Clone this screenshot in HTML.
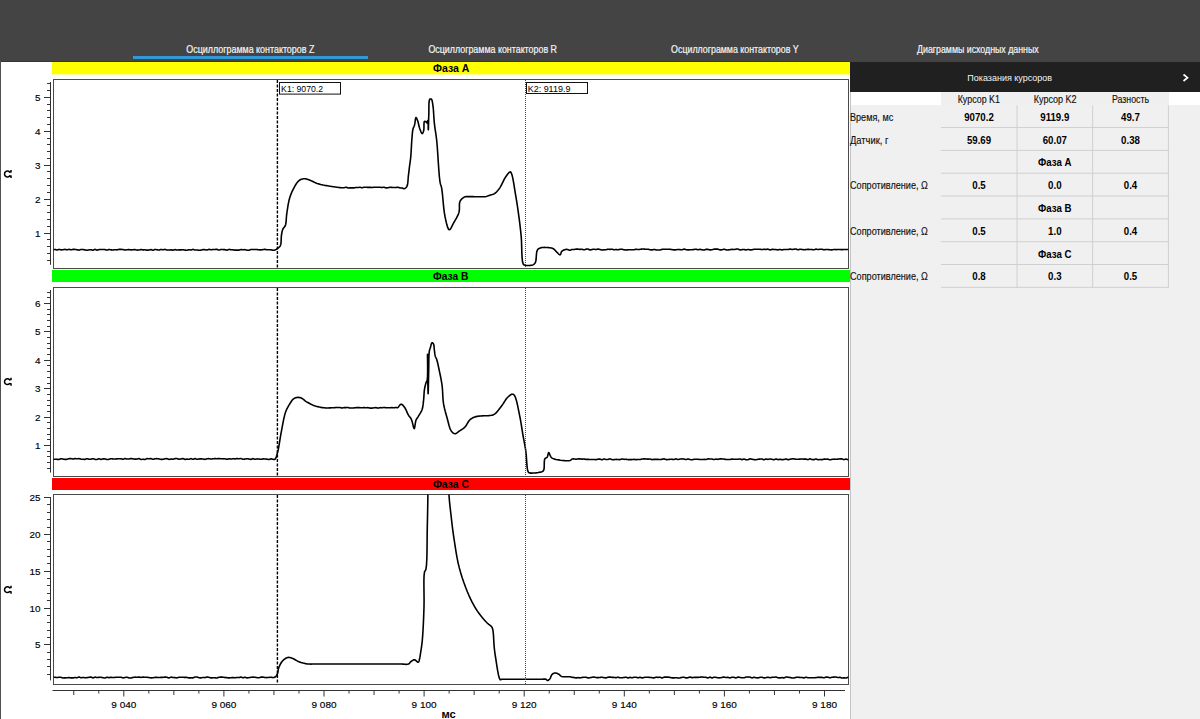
<!DOCTYPE html>
<html><head><meta charset="utf-8">
<style>
html,body{margin:0;padding:0;}
body{width:1200px;height:719px;overflow:hidden;position:relative;background:#fff;}
svg{position:absolute;left:0;top:0;display:block;}
</style></head><body>
<svg width="1200" height="719" viewBox="0 0 1200 719">
<rect x="0" y="0" width="1200" height="61" fill="#444444"/>
<rect x="0" y="61" width="850" height="1" fill="#34343c"/><rect x="850" y="61" width="350" height="1" fill="#444444"/>
<text x="186.30" y="52.80" text-anchor="start" font-family='"Liberation Sans", sans-serif' font-weight="normal" font-size="10.2" fill="#f4f4f4" textLength="128.10" lengthAdjust="spacingAndGlyphs" stroke="#f4f4f4" stroke-width="0.2">Осциллограмма контакторов Z</text>
<text x="428.40" y="52.80" text-anchor="start" font-family='"Liberation Sans", sans-serif' font-weight="normal" font-size="10.2" fill="#f4f4f4" textLength="128.60" lengthAdjust="spacingAndGlyphs" stroke="#f4f4f4" stroke-width="0.2">Осциллограмма контакторов R</text>
<text x="671.10" y="52.80" text-anchor="start" font-family='"Liberation Sans", sans-serif' font-weight="normal" font-size="10.2" fill="#f4f4f4" textLength="127.60" lengthAdjust="spacingAndGlyphs" stroke="#f4f4f4" stroke-width="0.2">Осциллограмма контакторов Y</text>
<text x="917.10" y="52.80" text-anchor="start" font-family='"Liberation Sans", sans-serif' font-weight="normal" font-size="10.2" fill="#f4f4f4" textLength="121.60" lengthAdjust="spacingAndGlyphs" stroke="#f4f4f4" stroke-width="0.2">Диаграммы исходных данных</text>
<rect x="133" y="56" width="235" height="3" fill="#3399d6"/>
<rect x="0" y="62" width="850" height="657" fill="#ffffff"/>
<rect x="0" y="61" width="1" height="658" fill="#505050"/>
<defs>
<clipPath id="c0"><rect x="53.5" y="79.5" width="795" height="188"/></clipPath>
<clipPath id="c1"><rect x="53.5" y="287.5" width="795" height="188"/></clipPath>
<clipPath id="c2"><rect x="53.5" y="494.5" width="795" height="189"/></clipPath>
</defs>
<rect x="52" y="62" width="798" height="12.4" fill="#ffff00"/>
<text x="432.90" y="72.00" text-anchor="start" font-family='"Liberation Sans", sans-serif' font-weight="bold" font-size="10.1" fill="#000" textLength="36.50" lengthAdjust="spacingAndGlyphs">Фаза A</text>
<rect x="52" y="270" width="798" height="12" fill="#00ff00"/>
<text x="432.90" y="280.00" text-anchor="start" font-family='"Liberation Sans", sans-serif' font-weight="bold" font-size="10.1" fill="#000" textLength="35.50" lengthAdjust="spacingAndGlyphs">Фаза B</text>
<rect x="52" y="478" width="798" height="12" fill="#ff0000"/>
<text x="432.90" y="488.00" text-anchor="start" font-family='"Liberation Sans", sans-serif' font-weight="bold" font-size="10.1" fill="#000" textLength="36.20" lengthAdjust="spacingAndGlyphs">Фаза C</text>
<rect x="53.5" y="79.5" width="795" height="189" fill="#fff" stroke="#4a4a4a" stroke-width="1"/>
<rect x="53.5" y="287.5" width="795" height="189" fill="#fff" stroke="#4a4a4a" stroke-width="1"/>
<rect x="53.5" y="494.5" width="795" height="190" fill="#fff" stroke="#4a4a4a" stroke-width="1"/>
<polyline clip-path="url(#c0)" points="53.00,249.64 53.10,249.63 53.37,249.59 53.75,249.55 54.19,249.50 54.62,249.48 55.00,249.49 55.33,249.54 55.67,249.63 56.00,249.73 56.33,249.83 56.67,249.91 57.00,249.94 57.33,249.89 57.67,249.80 58.00,249.68 58.33,249.55 58.67,249.46 59.00,249.42 59.33,249.44 59.67,249.51 60.00,249.60 60.33,249.70 60.67,249.79 61.00,249.83 61.33,249.84 61.67,249.83 62.00,249.80 62.33,249.76 62.67,249.72 63.00,249.68 63.33,249.63 63.67,249.57 64.00,249.51 64.33,249.45 64.67,249.41 65.00,249.40 65.33,249.44 65.67,249.52 66.00,249.61 66.33,249.71 66.67,249.78 67.00,249.81 67.33,249.78 67.67,249.70 68.00,249.60 68.33,249.50 68.67,249.42 69.00,249.38 69.33,249.41 69.67,249.47 70.00,249.56 70.33,249.64 70.67,249.71 71.00,249.74 71.33,249.72 71.67,249.67 72.00,249.60 72.33,249.52 72.67,249.46 73.00,249.41 73.33,249.39 73.67,249.38 74.00,249.38 74.33,249.39 74.67,249.41 75.00,249.43 75.33,249.46 75.67,249.51 76.00,249.56 76.33,249.62 76.67,249.68 77.00,249.73 77.33,249.80 77.67,249.88 78.00,249.97 78.34,250.04 78.67,250.09 79.00,250.09 79.33,250.04 79.67,249.93 80.00,249.80 80.33,249.66 80.66,249.54 81.00,249.46 81.33,249.43 81.66,249.43 82.00,249.45 82.33,249.48 82.67,249.51 83.00,249.55 83.33,249.60 83.67,249.65 84.00,249.72 84.33,249.79 84.67,249.86 85.00,249.91 85.33,249.97 85.67,250.04 86.00,250.10 86.33,250.16 86.67,250.19 87.00,250.20 87.33,250.18 87.67,250.13 88.00,250.06 88.33,249.99 88.67,249.92 89.00,249.87 89.33,249.82 89.67,249.78 90.00,249.74 90.34,249.71 90.67,249.69 91.00,249.71 91.34,249.77 91.67,249.88 92.00,250.01 92.34,250.13 92.67,250.21 93.00,250.23 93.34,250.15 93.67,249.99 94.00,249.80 94.33,249.61 94.67,249.46 95.00,249.39 95.33,249.44 95.66,249.57 96.00,249.74 96.33,249.91 96.66,250.06 97.00,250.12 97.33,250.10 97.66,250.03 98.00,249.92 98.33,249.80 98.66,249.69 99.00,249.61 99.33,249.57 99.66,249.54 100.00,249.52 100.33,249.50 100.67,249.49 101.00,249.48 101.33,249.47 101.67,249.46 102.00,249.45 102.33,249.45 102.67,249.45 103.00,249.46 103.33,249.47 103.67,249.49 104.00,249.51 104.34,249.54 104.67,249.58 105.00,249.63 105.33,249.70 105.67,249.80 106.00,249.90 106.34,250.00 106.67,250.06 107.00,250.08 107.33,250.04 107.67,249.94 108.00,249.80 108.33,249.67 108.67,249.57 109.00,249.51 109.33,249.52 109.66,249.58 110.00,249.65 110.33,249.74 110.67,249.82 111.00,249.87 111.33,249.90 111.67,249.92 112.00,249.94 112.33,249.94 112.67,249.94 113.00,249.93 113.33,249.90 113.67,249.85 114.00,249.80 114.33,249.75 114.67,249.71 115.00,249.69 115.33,249.70 115.67,249.73 116.00,249.78 116.33,249.82 116.67,249.85 117.00,249.84 117.33,249.80 117.67,249.73 118.00,249.63 118.33,249.54 118.67,249.46 119.00,249.41 119.33,249.38 119.67,249.37 120.00,249.37 120.33,249.38 120.67,249.39 121.00,249.40 121.33,249.41 121.67,249.43 122.00,249.44 122.33,249.47 122.67,249.50 123.00,249.54 123.33,249.60 123.67,249.68 124.00,249.77 124.33,249.86 124.67,249.93 125.00,249.96 125.33,249.96 125.67,249.93 126.00,249.88 126.33,249.83 126.67,249.77 127.00,249.73 127.33,249.71 127.67,249.68 128.00,249.65 128.33,249.64 128.67,249.63 129.00,249.63 129.33,249.66 129.67,249.70 130.00,249.76 130.33,249.81 130.67,249.85 131.00,249.88 131.33,249.88 131.67,249.86 132.00,249.84 132.33,249.81 132.67,249.78 133.00,249.76 133.33,249.73 133.67,249.69 134.00,249.65 134.33,249.62 134.67,249.61 135.00,249.62 135.33,249.67 135.67,249.74 136.00,249.84 136.33,249.93 136.67,250.01 137.00,250.06 137.33,250.08 137.67,250.09 138.00,250.07 138.33,250.05 138.67,250.02 139.00,249.98 139.33,249.92 139.67,249.84 140.00,249.75 140.33,249.67 140.67,249.60 141.00,249.57 141.33,249.58 141.67,249.63 142.00,249.70 142.33,249.77 142.67,249.83 143.00,249.87 143.33,249.88 143.67,249.86 144.00,249.84 144.33,249.82 144.67,249.81 145.00,249.82 145.33,249.86 145.67,249.92 146.00,249.99 146.33,250.05 146.67,250.11 147.00,250.14 147.33,250.14 147.67,250.14 148.00,250.12 148.33,250.09 148.67,250.05 149.00,250.01 149.33,249.94 149.67,249.86 150.00,249.76 150.34,249.68 150.67,249.62 151.00,249.61 151.34,249.67 151.67,249.79 152.00,249.94 152.34,250.09 152.67,250.20 153.00,250.23 153.33,250.17 153.67,250.04 154.00,249.87 154.33,249.69 154.66,249.54 155.00,249.46 155.33,249.44 155.66,249.47 156.00,249.53 156.33,249.60 156.67,249.67 157.00,249.73 157.33,249.78 157.67,249.86 158.00,249.93 158.34,249.99 158.67,250.03 159.00,250.03 159.33,249.98 159.67,249.88 160.00,249.76 160.33,249.64 160.67,249.54 161.00,249.49 161.33,249.50 161.67,249.55 162.00,249.63 162.33,249.71 162.67,249.77 163.00,249.79 163.33,249.75 163.67,249.67 164.00,249.57 164.34,249.48 164.67,249.41 165.00,249.39 165.33,249.43 165.67,249.52 166.00,249.64 166.33,249.76 166.66,249.87 167.00,249.95 167.33,250.00 167.66,250.02 168.00,250.04 168.33,250.05 168.67,250.04 169.00,250.04 169.33,250.02 169.67,249.98 170.00,249.94 170.33,249.90 170.67,249.87 171.00,249.87 171.33,249.89 171.67,249.95 172.00,250.02 172.34,250.09 172.67,250.13 173.00,250.14 173.33,250.09 173.67,250.00 174.00,249.88 174.33,249.77 174.67,249.68 175.00,249.63 175.33,249.65 175.66,249.70 176.00,249.78 176.33,249.86 176.67,249.93 177.00,249.98 177.33,249.98 177.67,249.97 178.00,249.95 178.33,249.93 178.67,249.90 179.00,249.88 179.33,249.88 179.67,249.88 180.00,249.88 180.33,249.88 180.67,249.88 181.00,249.87 181.33,249.85 181.67,249.83 182.00,249.79 182.33,249.77 182.67,249.75 183.00,249.76 183.33,249.79 183.67,249.85 184.00,249.92 184.33,249.99 184.67,250.06 185.00,250.11 185.33,250.14 185.67,250.17 186.00,250.20 186.33,250.22 186.67,250.22 187.00,250.20 187.33,250.15 187.67,250.08 188.00,249.98 188.33,249.89 188.67,249.82 189.00,249.78 189.33,249.78 189.67,249.82 190.00,249.87 190.33,249.92 190.67,249.95 191.00,249.95 191.34,249.89 191.67,249.78 192.00,249.65 192.33,249.53 192.67,249.44 193.00,249.40 193.33,249.44 193.67,249.54 194.00,249.66 194.33,249.79 194.66,249.91 195.00,249.98 195.33,250.00 195.66,250.00 196.00,249.97 196.33,249.94 196.67,249.93 197.00,249.93 197.33,249.97 197.67,250.03 198.00,250.09 198.33,250.16 198.67,250.21 199.00,250.24 199.33,250.25 199.67,250.24 200.00,250.22 200.33,250.18 200.67,250.14 201.00,250.09 201.33,250.02 201.67,249.93 202.00,249.83 202.33,249.74 202.67,249.66 203.00,249.61 203.33,249.59 203.66,249.59 204.00,249.61 204.33,249.63 204.67,249.67 205.00,249.70 205.33,249.74 205.67,249.80 206.00,249.87 206.34,249.92 206.67,249.95 207.00,249.95 207.33,249.89 207.67,249.78 208.00,249.65 208.33,249.52 208.67,249.42 209.00,249.37 209.33,249.39 209.66,249.46 210.00,249.55 210.33,249.65 210.67,249.73 211.00,249.77 211.33,249.76 211.67,249.72 212.00,249.66 212.33,249.60 212.67,249.54 213.00,249.50 213.33,249.48 213.67,249.47 214.00,249.47 214.33,249.46 214.67,249.46 215.00,249.46 215.33,249.44 215.67,249.41 216.00,249.39 216.34,249.37 216.67,249.37 217.00,249.40 217.34,249.48 217.67,249.61 218.00,249.75 218.33,249.89 218.67,250.00 219.00,250.04 219.33,250.01 219.66,249.91 220.00,249.79 220.33,249.65 220.66,249.54 221.00,249.47 221.33,249.45 221.66,249.45 222.00,249.48 222.33,249.51 222.67,249.55 223.00,249.57 223.33,249.59 223.67,249.60 224.00,249.62 224.33,249.64 224.67,249.66 225.00,249.70 225.33,249.77 225.67,249.87 226.00,249.97 226.34,250.06 226.67,250.12 227.00,250.13 227.33,250.07 227.67,249.94 228.00,249.78 228.33,249.62 228.66,249.49 229.00,249.42 229.33,249.42 229.66,249.47 230.00,249.54 230.33,249.62 230.67,249.70 231.00,249.75 231.33,249.78 231.67,249.79 232.00,249.80 232.33,249.81 232.67,249.82 233.00,249.84 233.33,249.89 233.67,249.94 234.00,250.00 234.33,250.06 234.67,250.11 235.00,250.15 235.33,250.15 235.67,250.15 236.00,250.13 236.33,250.11 236.67,250.10 237.00,250.09 237.33,250.09 237.67,250.11 238.00,250.14 238.34,250.15 238.67,250.15 239.00,250.13 239.33,250.07 239.67,249.97 240.00,249.86 240.33,249.75 240.67,249.66 241.00,249.60 241.33,249.59 241.66,249.60 242.00,249.63 242.33,249.67 242.67,249.71 243.00,249.72 243.33,249.72 243.67,249.70 244.00,249.68 244.34,249.66 244.67,249.65 245.00,249.67 245.33,249.73 245.67,249.81 246.00,249.90 246.33,250.00 246.67,250.08 247.00,250.15 247.33,250.19 247.67,250.23 248.00,250.25 248.34,250.26 248.67,250.25 249.00,250.21 249.34,250.13 249.67,250.00 250.00,249.85 250.33,249.70 250.66,249.57 251.00,249.49 251.33,249.45 251.66,249.44 252.00,249.45 252.33,249.47 252.67,249.49 253.00,249.51 253.33,249.52 253.67,249.53 254.00,249.54 254.33,249.54 254.67,249.55 255.00,249.56 255.33,249.56 255.67,249.55 256.00,249.55 256.33,249.54 256.67,249.55 257.00,249.56 257.33,249.59 257.67,249.62 258.00,249.67 258.33,249.71 258.67,249.75 259.00,249.79 259.33,249.81 259.67,249.84 260.00,249.87 260.33,249.88 260.67,249.89 261.00,249.88 261.33,249.85 261.67,249.81 262.00,249.75 262.33,249.69 262.67,249.64 263.00,249.59 263.33,249.54 263.67,249.48 264.00,249.43 264.33,249.38 264.67,249.36 265.00,249.35 265.33,249.39 265.67,249.45 266.00,249.53 266.33,249.61 266.67,249.68 267.00,249.73 267.33,249.74 267.67,249.73 268.00,249.72 268.33,249.70 268.67,249.68 269.00,249.68 269.33,249.70 269.67,249.72 270.00,249.75 270.33,249.78 270.67,249.82 271.00,249.86 271.33,249.91 271.67,249.98 272.00,250.06 272.33,250.13 272.67,250.18 273.00,250.21 273.33,250.21 273.66,250.21 273.99,250.18 274.33,250.14 274.66,250.07 275.00,249.97 275.43,249.80 275.86,249.58 276.30,249.33 276.74,249.04 277.17,248.73 277.60,248.40 278.10,248.03 278.61,247.65 279.11,247.24 279.59,246.78 280.03,246.24 280.40,245.60 280.83,244.22 281.05,242.48 281.16,240.53 281.22,238.52 281.31,236.59 281.50,234.90 281.70,233.75 281.90,232.64 282.11,231.59 282.36,230.59 282.65,229.66 283.00,228.80 283.34,228.23 283.73,227.76 284.15,227.33 284.57,226.88 284.97,226.35 285.30,225.70 285.73,224.18 286.01,222.32 286.20,220.22 286.35,217.98 286.53,215.71 286.80,213.50 287.17,211.00 287.56,208.39 287.98,205.72 288.45,203.09 288.98,200.56 289.60,198.20 290.17,196.38 290.79,194.65 291.45,192.98 292.15,191.38 292.90,189.82 293.70,188.30 294.48,186.86 295.29,185.40 296.15,183.99 297.05,182.67 298.00,181.52 299.00,180.60 299.84,180.03 300.72,179.57 301.63,179.21 302.55,178.94 303.48,178.78 304.40,178.70 305.29,178.74 306.19,178.91 307.08,179.18 307.98,179.50 308.89,179.85 309.80,180.20 310.81,180.61 311.83,181.08 312.85,181.58 313.88,182.09 314.93,182.57 316.00,183.00 317.13,183.40 318.29,183.76 319.46,184.11 320.64,184.43 321.82,184.72 323.00,185.00 324.15,185.24 325.28,185.46 326.42,185.65 327.57,185.83 328.76,186.01 330.00,186.20 331.65,186.46 333.48,186.74 335.36,187.01 337.16,187.27 338.75,187.48 340.00,187.61 340.42,187.65 340.78,187.67 341.09,187.68 341.39,187.68 341.68,187.69 342.00,187.69 342.33,187.71 342.67,187.73 343.00,187.75 343.34,187.77 343.67,187.76 344.00,187.74 344.34,187.68 344.67,187.57 345.00,187.45 345.34,187.34 345.67,187.27 346.00,187.24 346.33,187.30 346.67,187.41 347.00,187.56 347.33,187.71 347.66,187.84 348.00,187.92 348.33,187.94 348.66,187.94 349.00,187.91 349.33,187.87 349.67,187.84 350.00,187.82 350.33,187.83 350.67,187.84 351.00,187.86 351.33,187.88 351.67,187.89 352.00,187.90 352.33,187.90 352.67,187.90 353.00,187.89 353.33,187.88 353.67,187.87 354.00,187.84 354.33,187.80 354.67,187.74 355.00,187.67 355.33,187.61 355.67,187.55 356.00,187.51 356.33,187.50 356.67,187.50 357.00,187.51 357.33,187.52 357.67,187.53 358.00,187.52 358.33,187.49 358.67,187.43 359.00,187.38 359.33,187.32 359.67,187.29 360.00,187.28 360.33,187.33 360.67,187.41 361.00,187.51 361.33,187.61 361.67,187.68 362.00,187.71 362.33,187.68 362.67,187.60 363.00,187.50 363.33,187.40 363.67,187.31 364.00,187.25 364.33,187.22 364.66,187.21 365.00,187.22 365.33,187.23 365.67,187.24 366.00,187.25 366.33,187.27 366.67,187.29 367.00,187.31 367.33,187.34 367.67,187.36 368.00,187.37 368.33,187.37 368.67,187.36 369.00,187.35 369.33,187.33 369.67,187.33 370.00,187.33 370.33,187.35 370.67,187.38 371.00,187.41 371.33,187.45 371.67,187.47 372.00,187.47 372.33,187.45 372.67,187.42 373.00,187.37 373.33,187.32 373.67,187.27 374.00,187.24 374.33,187.22 374.67,187.21 375.00,187.20 375.33,187.20 375.67,187.20 376.00,187.20 376.33,187.21 376.67,187.23 377.00,187.26 377.33,187.29 377.67,187.31 378.00,187.32 378.33,187.32 378.67,187.31 379.00,187.30 379.33,187.28 379.67,187.28 380.00,187.28 380.33,187.31 380.67,187.35 381.00,187.40 381.33,187.45 381.67,187.48 382.00,187.49 382.33,187.46 382.67,187.40 383.00,187.33 383.34,187.26 383.67,187.22 384.00,187.22 384.34,187.29 384.67,187.41 385.00,187.56 385.33,187.70 385.66,187.83 386.00,187.90 386.33,187.92 386.66,187.90 387.00,187.86 387.33,187.80 387.67,187.75 388.00,187.69 388.33,187.63 388.67,187.56 389.00,187.49 389.33,187.42 389.67,187.36 390.00,187.32 390.33,187.31 390.67,187.31 391.00,187.33 391.33,187.36 391.67,187.38 392.00,187.40 392.33,187.42 392.67,187.43 393.00,187.44 393.33,187.46 393.67,187.47 394.00,187.48 394.33,187.49 394.67,187.49 395.00,187.50 395.33,187.50 395.67,187.50 396.00,187.49 396.33,187.46 396.67,187.41 397.00,187.36 397.34,187.31 397.67,187.29 398.00,187.30 398.33,187.36 398.67,187.45 399.00,187.57 399.33,187.69 399.66,187.80 400.00,187.88 400.33,187.92 400.66,187.93 400.99,187.93 401.33,187.93 401.66,187.95 402.00,187.99 402.36,188.10 402.73,188.27 403.10,188.45 403.47,188.61 403.83,188.71 404.20,188.70 404.67,188.55 405.15,188.30 405.64,187.94 406.10,187.50 406.53,186.99 406.90,186.40 407.39,185.10 407.71,183.43 407.93,181.53 408.08,179.52 408.22,177.54 408.40,175.70 408.60,174.13 408.78,172.58 408.96,171.06 409.14,169.54 409.31,168.03 409.50,166.50 409.70,165.00 409.90,163.55 410.11,162.10 410.32,160.60 410.52,159.02 410.70,157.30 410.93,154.55 411.13,151.46 411.32,148.20 411.50,144.92 411.69,141.80 411.90,139.00 412.06,137.10 412.20,135.26 412.34,133.50 412.51,131.86 412.73,130.35 413.00,129.00 413.22,128.27 413.47,127.64 413.73,127.07 414.00,126.50 414.26,125.90 414.50,125.20 414.78,123.91 415.01,122.29 415.22,120.60 415.44,119.07 415.70,117.96 416.00,117.50 416.24,117.62 416.50,117.98 416.78,118.53 417.06,119.20 417.33,119.91 417.60,120.60 417.99,121.78 418.36,123.18 418.72,124.70 419.09,126.24 419.47,127.71 419.90,129.00 420.26,129.97 420.65,130.99 421.05,131.98 421.45,132.81 421.84,133.39 422.20,133.60 422.48,133.46 422.75,133.09 423.02,132.55 423.27,131.90 423.50,131.20 423.70,130.50 423.90,129.11 423.96,127.30 423.96,125.35 423.99,123.54 424.14,122.13 424.50,121.40 424.76,121.33 425.08,121.39 425.42,121.52 425.76,121.71 426.06,121.92 426.30,122.10 426.42,122.24 426.51,122.41 426.58,122.59 426.65,122.75 426.72,122.86 426.80,122.90 426.96,122.72 427.14,122.28 427.32,121.72 427.50,121.17 427.66,120.75 427.80,120.60 427.99,121.31 428.11,123.02 428.17,125.23 428.21,127.43 428.24,129.13 428.30,129.80 428.39,129.02 428.46,126.97 428.53,124.06 428.60,120.73 428.69,117.40 428.80,114.50 428.87,111.68 428.87,108.54 428.90,105.40 429.01,102.59 429.28,100.41 429.80,99.20 430.04,99.04 430.31,98.94 430.60,98.92 430.89,98.96 431.16,99.05 431.40,99.20 431.78,99.71 432.08,100.51 432.32,101.53 432.52,102.71 432.70,103.99 432.90,105.30 433.22,107.80 433.47,110.72 433.68,113.93 433.88,117.26 434.11,120.57 434.40,123.70 434.74,126.46 435.11,129.08 435.51,131.68 435.91,134.37 436.32,137.27 436.70,140.50 437.26,146.73 437.78,154.23 438.29,162.23 438.82,169.99 439.38,176.77 440.00,181.80 440.27,183.18 440.55,184.26 440.84,185.17 441.13,186.07 441.42,187.09 441.70,188.40 442.22,192.07 442.69,196.71 443.16,201.90 443.66,207.20 444.26,212.21 445.00,216.50 445.60,219.32 446.25,222.27 446.95,225.07 447.69,227.44 448.47,229.11 449.30,229.80 449.96,229.53 450.66,228.68 451.39,227.42 452.13,225.94 452.87,224.41 453.60,223.00 454.54,221.36 455.55,219.62 456.57,217.81 457.53,215.95 458.36,214.07 459.00,212.20 459.33,210.36 459.43,208.43 459.41,206.47 459.41,204.59 459.56,202.87 460.00,201.40 460.53,200.45 461.18,199.58 461.91,198.80 462.71,198.13 463.54,197.56 464.40,197.10 465.26,196.81 466.18,196.65 467.13,196.59 468.11,196.59 469.07,196.61 470.00,196.60 470.85,196.59 471.69,196.60 472.52,196.62 473.34,196.65 474.17,196.68 475.00,196.70 475.83,196.71 476.66,196.71 477.49,196.71 478.32,196.70 479.16,196.70 480.00,196.70 480.88,196.72 481.77,196.76 482.67,196.80 483.56,196.82 484.44,196.79 485.30,196.70 486.09,196.54 486.87,196.31 487.63,196.05 488.38,195.76 489.14,195.47 489.90,195.20 490.67,194.96 491.46,194.76 492.24,194.55 493.01,194.30 493.77,194.00 494.50,193.60 495.31,193.01 496.11,192.32 496.89,191.54 497.63,190.70 498.34,189.85 499.00,189.00 499.59,188.17 500.13,187.31 500.64,186.43 501.13,185.53 501.61,184.62 502.10,183.70 502.61,182.71 503.09,181.68 503.56,180.64 504.06,179.60 504.60,178.59 505.20,177.60 505.96,176.48 506.83,175.24 507.74,174.02 508.64,172.96 509.45,172.20 510.10,171.90 510.34,171.92 510.55,172.01 510.74,172.17 510.93,172.39 511.11,172.67 511.30,173.00 512.08,175.18 512.89,178.68 513.69,183.04 514.47,187.80 515.21,192.51 515.90,196.70 516.47,200.11 517.01,203.45 517.52,206.75 517.99,210.02 518.45,213.30 518.90,216.60 519.33,219.88 519.74,223.11 520.13,226.34 520.50,229.62 520.86,232.99 521.20,236.50 521.50,241.24 521.67,246.68 521.81,252.24 522.05,257.35 522.48,261.46 523.20,264.00 523.45,264.38 523.70,264.65 523.97,264.84 524.26,264.98 524.60,265.09 525.00,265.20 526.01,265.39 527.32,265.49 528.78,265.50 530.26,265.41 531.61,265.22 532.70,264.90 533.29,264.63 533.80,264.31 534.26,263.95 534.67,263.52 535.04,263.01 535.40,262.40 535.89,260.82 536.16,258.68 536.31,256.27 536.48,253.86 536.77,251.75 537.30,250.20 537.70,249.61 538.14,249.13 538.61,248.74 539.13,248.42 539.69,248.15 540.30,247.90 541.18,247.65 542.16,247.50 543.22,247.43 544.32,247.42 545.42,247.45 546.50,247.50 547.65,247.57 548.87,247.67 550.08,247.81 551.26,248.02 552.35,248.31 553.30,248.70 553.93,249.10 554.47,249.57 554.95,250.09 555.41,250.64 555.88,251.18 556.40,251.70 557.03,252.31 557.71,253.02 558.41,253.72 559.08,254.33 559.69,254.72 560.20,254.80 560.52,254.54 560.74,254.03 560.91,253.36 561.09,252.63 561.34,251.94 561.70,251.40 562.29,250.91 563.02,250.46 563.83,250.07 564.68,249.76 565.52,249.53 566.30,249.40 566.95,249.42 567.60,249.57 568.24,249.78 568.86,250.00 569.45,250.16 570.00,250.20 570.37,250.14 570.71,250.01 571.04,249.86 571.35,249.70 571.67,249.56 572.00,249.47 572.33,249.44 572.66,249.44 573.00,249.46 573.33,249.48 573.67,249.50 574.00,249.49 574.33,249.44 574.67,249.38 575.00,249.31 575.33,249.23 575.67,249.17 576.00,249.13 576.33,249.11 576.67,249.10 577.00,249.10 577.33,249.11 577.67,249.12 578.00,249.14 578.33,249.17 578.67,249.21 579.00,249.26 579.33,249.30 579.67,249.34 580.00,249.36 580.33,249.36 580.67,249.34 581.00,249.31 581.34,249.28 581.67,249.27 582.00,249.29 582.34,249.35 582.67,249.46 583.00,249.57 583.34,249.69 583.67,249.77 584.00,249.80 584.33,249.75 584.67,249.66 585.00,249.54 585.33,249.40 585.66,249.28 586.00,249.20 586.33,249.14 586.67,249.09 587.00,249.05 587.34,249.03 587.67,249.03 588.00,249.07 588.34,249.17 588.67,249.32 589.00,249.50 589.33,249.68 589.66,249.83 590.00,249.91 590.33,249.91 590.66,249.86 591.00,249.79 591.33,249.69 591.67,249.60 592.00,249.53 592.33,249.46 592.67,249.38 593.00,249.31 593.33,249.24 593.67,249.20 594.00,249.18 594.33,249.21 594.67,249.28 595.00,249.37 595.33,249.45 595.67,249.52 596.00,249.54 596.33,249.50 596.67,249.41 597.00,249.30 597.33,249.19 597.67,249.11 598.00,249.07 598.33,249.10 598.67,249.16 599.00,249.25 599.33,249.34 599.67,249.44 600.00,249.53 600.33,249.60 600.67,249.68 601.00,249.76 601.33,249.84 601.67,249.89 602.00,249.93 602.33,249.94 602.67,249.94 603.00,249.91 603.33,249.88 603.67,249.85 604.00,249.83 604.33,249.81 604.67,249.79 605.00,249.77 605.33,249.75 605.67,249.72 606.00,249.68 606.33,249.62 606.67,249.55 607.00,249.47 607.33,249.39 607.67,249.32 608.00,249.29 608.33,249.28 608.67,249.29 609.00,249.32 609.33,249.35 609.67,249.37 610.00,249.38 610.33,249.36 610.67,249.31 611.00,249.26 611.34,249.22 611.67,249.19 612.00,249.20 612.33,249.26 612.67,249.36 613.00,249.47 613.33,249.59 613.67,249.69 614.00,249.74 614.33,249.75 614.66,249.71 615.00,249.66 615.33,249.60 615.67,249.55 616.00,249.53 616.33,249.55 616.67,249.59 617.00,249.65 617.33,249.71 617.67,249.75 618.00,249.75 618.33,249.72 618.67,249.65 619.00,249.57 619.33,249.48 619.67,249.40 620.00,249.35 620.33,249.31 620.67,249.27 621.00,249.24 621.34,249.23 621.67,249.23 622.00,249.25 622.33,249.31 622.67,249.39 623.00,249.50 623.33,249.61 623.67,249.71 624.00,249.78 624.33,249.83 624.66,249.87 625.00,249.90 625.33,249.92 625.67,249.93 626.00,249.94 626.33,249.93 626.67,249.91 627.00,249.89 627.33,249.86 627.67,249.84 628.00,249.82 628.33,249.81 628.67,249.80 629.00,249.79 629.33,249.78 629.67,249.78 630.00,249.78 630.33,249.78 630.67,249.78 631.00,249.78 631.33,249.79 631.67,249.79 632.00,249.79 632.33,249.78 632.67,249.78 633.00,249.78 633.34,249.77 633.67,249.75 634.00,249.72 634.33,249.65 634.67,249.56 635.00,249.46 635.33,249.37 635.67,249.29 636.00,249.25 636.33,249.26 636.67,249.30 637.00,249.37 637.33,249.43 637.67,249.49 638.00,249.52 638.33,249.52 638.67,249.50 639.00,249.48 639.33,249.44 639.67,249.41 640.00,249.37 640.33,249.33 640.67,249.27 641.00,249.21 641.33,249.16 641.67,249.11 642.00,249.08 642.33,249.06 642.67,249.05 643.00,249.04 643.33,249.05 643.67,249.06 644.00,249.08 644.33,249.10 644.67,249.14 645.00,249.19 645.33,249.24 645.67,249.28 646.00,249.30 646.33,249.31 646.67,249.30 647.00,249.28 647.33,249.27 647.67,249.27 648.00,249.28 648.33,249.33 648.67,249.39 649.00,249.46 649.33,249.54 649.67,249.61 650.00,249.67 650.33,249.73 650.67,249.79 651.00,249.84 651.33,249.89 651.67,249.91 652.00,249.91 652.33,249.86 652.67,249.78 653.00,249.67 653.33,249.56 653.67,249.48 654.00,249.45 654.33,249.48 654.67,249.55 655.00,249.64 655.33,249.74 655.67,249.83 656.00,249.89 656.33,249.92 656.66,249.94 657.00,249.95 657.33,249.94 657.67,249.94 658.00,249.94 658.33,249.94 658.67,249.95 659.00,249.96 659.34,249.96 659.67,249.94 660.00,249.91 660.33,249.85 660.67,249.75 661.00,249.65 661.33,249.54 661.67,249.45 662.00,249.38 662.33,249.33 662.66,249.30 663.00,249.28 663.33,249.27 663.67,249.26 664.00,249.25 664.33,249.24 664.67,249.24 665.00,249.24 665.33,249.25 665.67,249.25 666.00,249.25 666.33,249.25 666.67,249.25 667.00,249.24 667.33,249.23 667.67,249.23 668.00,249.23 668.33,249.22 668.67,249.21 669.00,249.21 669.33,249.20 669.67,249.21 670.00,249.23 670.33,249.28 670.67,249.34 671.00,249.41 671.33,249.48 671.67,249.55 672.00,249.61 672.33,249.66 672.67,249.72 673.00,249.76 673.33,249.80 673.67,249.84 674.00,249.86 674.33,249.87 674.67,249.87 675.00,249.87 675.33,249.86 675.67,249.83 676.00,249.81 676.33,249.76 676.67,249.70 677.00,249.63 677.33,249.56 677.67,249.51 678.00,249.48 678.33,249.48 678.67,249.50 679.00,249.53 679.33,249.57 679.67,249.61 680.00,249.64 680.33,249.67 680.67,249.71 681.00,249.75 681.34,249.78 681.67,249.79 682.00,249.77 682.34,249.69 682.67,249.57 683.00,249.42 683.33,249.28 683.67,249.17 684.00,249.13 684.33,249.15 684.66,249.22 685.00,249.33 685.33,249.45 685.66,249.56 686.00,249.64 686.33,249.70 686.66,249.75 687.00,249.80 687.33,249.83 687.67,249.85 688.00,249.87 688.33,249.87 688.67,249.85 689.00,249.83 689.33,249.80 689.67,249.77 690.00,249.75 690.33,249.75 690.67,249.75 691.00,249.75 691.33,249.75 691.67,249.74 692.00,249.73 692.33,249.70 692.67,249.66 693.00,249.62 693.33,249.57 693.67,249.52 694.00,249.48 694.33,249.43 694.67,249.36 695.00,249.30 695.34,249.24 695.67,249.21 696.00,249.21 696.33,249.27 696.67,249.37 697.00,249.49 697.33,249.62 697.67,249.72 698.00,249.76 698.33,249.74 698.67,249.66 699.00,249.56 699.33,249.46 699.67,249.38 700.00,249.35 700.33,249.37 700.67,249.44 701.00,249.52 701.33,249.62 701.67,249.71 702.00,249.77 702.33,249.82 702.67,249.87 703.00,249.91 703.33,249.93 703.67,249.94 704.00,249.92 704.33,249.87 704.67,249.78 705.00,249.67 705.33,249.57 705.67,249.47 706.00,249.41 706.33,249.37 706.67,249.35 707.00,249.35 707.33,249.36 707.67,249.38 708.00,249.41 708.33,249.47 708.67,249.56 709.00,249.67 709.33,249.77 709.67,249.85 710.00,249.90 710.33,249.91 710.67,249.90 711.00,249.86 711.33,249.82 711.67,249.76 712.00,249.70 712.33,249.63 712.67,249.54 713.00,249.44 713.33,249.35 713.67,249.26 714.00,249.20 714.33,249.17 714.66,249.15 715.00,249.15 715.33,249.16 715.67,249.16 716.00,249.16 716.33,249.16 716.67,249.14 717.00,249.13 717.34,249.13 717.67,249.15 718.00,249.19 718.34,249.27 718.67,249.39 719.00,249.53 719.33,249.67 719.66,249.79 720.00,249.86 720.33,249.90 720.66,249.91 721.00,249.90 721.33,249.87 721.67,249.83 722.00,249.78 722.34,249.69 722.67,249.57 723.00,249.44 723.34,249.31 723.67,249.22 724.00,249.18 724.33,249.22 724.67,249.31 725.00,249.44 725.33,249.58 725.66,249.71 726.00,249.79 726.33,249.85 726.66,249.89 727.00,249.92 727.33,249.93 727.67,249.94 728.00,249.93 728.33,249.91 728.67,249.87 729.00,249.81 729.33,249.75 729.67,249.69 730.00,249.64 730.33,249.59 730.67,249.53 731.00,249.47 731.33,249.42 731.67,249.38 732.00,249.37 732.33,249.38 732.67,249.41 733.00,249.46 733.33,249.51 733.67,249.54 734.00,249.54 734.33,249.51 734.67,249.45 735.00,249.37 735.33,249.29 735.67,249.22 736.00,249.17 736.33,249.12 736.67,249.08 737.00,249.04 737.34,249.02 737.67,249.02 738.00,249.06 738.34,249.16 738.67,249.32 739.00,249.51 739.33,249.69 739.66,249.84 740.00,249.92 740.33,249.94 740.66,249.90 740.99,249.84 741.33,249.76 741.67,249.69 742.00,249.63 742.33,249.60 742.67,249.57 743.00,249.54 743.33,249.52 743.67,249.51 744.00,249.52 744.33,249.57 744.67,249.64 745.00,249.73 745.33,249.81 745.67,249.87 746.00,249.89 746.33,249.85 746.67,249.77 747.00,249.66 747.33,249.56 747.67,249.48 748.00,249.44 748.33,249.46 748.67,249.53 749.00,249.61 749.33,249.70 749.67,249.78 750.00,249.83 750.33,249.86 750.67,249.87 751.00,249.87 751.34,249.86 751.67,249.83 752.00,249.79 752.34,249.72 752.67,249.63 753.00,249.51 753.33,249.40 753.66,249.30 754.00,249.24 754.33,249.21 754.66,249.21 755.00,249.22 755.33,249.24 755.67,249.26 756.00,249.28 756.33,249.28 756.67,249.29 757.00,249.30 757.33,249.31 757.67,249.31 758.00,249.31 758.33,249.31 758.67,249.29 759.00,249.27 759.33,249.26 759.67,249.25 760.00,249.27 760.33,249.30 760.67,249.37 761.00,249.44 761.33,249.51 761.67,249.56 762.00,249.58 762.33,249.56 762.67,249.51 763.00,249.44 763.33,249.37 763.67,249.31 764.00,249.28 764.33,249.29 764.67,249.31 765.00,249.35 765.33,249.39 765.67,249.42 766.00,249.43 766.33,249.40 766.67,249.34 767.00,249.26 767.34,249.20 767.67,249.16 768.00,249.17 768.34,249.24 768.67,249.37 769.00,249.53 769.33,249.69 769.67,249.81 770.00,249.87 770.33,249.85 770.66,249.77 771.00,249.66 771.33,249.53 771.66,249.43 772.00,249.37 772.33,249.35 772.66,249.36 773.00,249.38 773.33,249.41 773.67,249.44 774.00,249.46 774.33,249.48 774.67,249.49 775.00,249.51 775.33,249.52 775.67,249.55 776.00,249.58 776.33,249.62 776.67,249.68 777.00,249.75 777.33,249.81 777.67,249.86 778.00,249.86 778.33,249.82 778.67,249.74 779.00,249.64 779.33,249.54 779.67,249.46 780.00,249.43 780.33,249.46 780.67,249.54 781.00,249.65 781.33,249.76 781.67,249.84 782.00,249.88 782.33,249.86 782.67,249.80 783.00,249.71 783.33,249.63 783.67,249.55 784.00,249.50 784.33,249.48 784.67,249.48 785.00,249.49 785.33,249.51 785.67,249.52 786.00,249.53 786.33,249.53 786.67,249.54 787.00,249.55 787.34,249.56 787.67,249.55 788.00,249.52 788.33,249.46 788.67,249.37 789.00,249.27 789.33,249.17 789.67,249.10 790.00,249.07 790.33,249.09 790.67,249.15 791.00,249.24 791.33,249.33 791.67,249.41 792.00,249.45 792.33,249.44 792.67,249.41 793.00,249.36 793.33,249.31 793.67,249.26 794.00,249.21 794.33,249.17 794.67,249.12 795.00,249.08 795.34,249.04 795.67,249.03 796.00,249.05 796.34,249.14 796.67,249.27 797.00,249.44 797.33,249.59 797.67,249.71 798.00,249.77 798.33,249.74 798.66,249.64 799.00,249.51 799.33,249.38 799.66,249.26 800.00,249.21 800.33,249.20 800.66,249.24 801.00,249.29 801.33,249.36 801.67,249.42 802.00,249.48 802.33,249.52 802.67,249.57 803.00,249.62 803.33,249.66 803.67,249.69 804.00,249.70 804.33,249.70 804.67,249.68 805.00,249.65 805.33,249.62 805.67,249.58 806.00,249.55 806.33,249.52 806.67,249.47 807.00,249.43 807.33,249.39 807.67,249.36 808.00,249.34 808.33,249.35 808.67,249.38 809.00,249.41 809.33,249.46 809.67,249.49 810.00,249.52 810.33,249.53 810.67,249.53 811.00,249.53 811.33,249.53 811.67,249.54 812.00,249.55 812.33,249.58 812.67,249.64 813.00,249.69 813.34,249.74 813.67,249.77 814.00,249.76 814.34,249.69 814.67,249.58 815.00,249.44 815.33,249.30 815.67,249.20 816.00,249.15 816.33,249.16 816.66,249.23 817.00,249.33 817.33,249.43 817.67,249.51 818.00,249.55 818.33,249.54 818.67,249.50 819.00,249.44 819.33,249.37 819.67,249.31 820.00,249.27 820.33,249.26 820.67,249.24 821.00,249.24 821.33,249.25 821.67,249.27 822.00,249.30 822.33,249.36 822.67,249.44 823.00,249.54 823.33,249.63 823.67,249.71 824.00,249.75 824.33,249.74 824.67,249.71 825.00,249.65 825.33,249.59 825.67,249.54 826.00,249.51 826.33,249.50 826.67,249.50 827.00,249.51 827.33,249.52 827.67,249.54 828.00,249.56 828.33,249.58 828.67,249.61 829.00,249.64 829.33,249.67 829.67,249.71 830.00,249.73 830.33,249.77 830.67,249.80 831.00,249.84 831.33,249.87 831.67,249.88 832.00,249.87 832.33,249.83 832.67,249.75 833.00,249.66 833.33,249.57 833.67,249.49 834.00,249.45 834.33,249.44 834.67,249.47 835.00,249.51 835.33,249.55 835.67,249.58 836.00,249.60 836.33,249.60 836.67,249.58 837.00,249.56 837.33,249.54 837.67,249.52 838.00,249.50 838.33,249.50 838.67,249.49 839.00,249.49 839.33,249.49 839.67,249.50 840.00,249.51 840.33,249.53 840.67,249.57 841.00,249.61 841.33,249.64 841.67,249.67 842.00,249.67 842.33,249.66 842.67,249.62 843.00,249.57 843.33,249.52 843.67,249.48 844.00,249.46 844.33,249.45 844.67,249.46 845.00,249.48 845.33,249.50 845.67,249.52 846.00,249.53 846.38,249.53 846.81,249.52 847.25,249.51 847.63,249.49 847.90,249.48 848.00,249.48" fill="none" stroke="#000" stroke-width="1.6" stroke-linejoin="round" stroke-linecap="round"/>
<polyline clip-path="url(#c1)" points="53.00,459.40 53.10,459.38 53.37,459.34 53.75,459.29 54.19,459.24 54.62,459.20 55.00,459.18 55.33,459.19 55.67,459.21 56.00,459.24 56.33,459.28 56.67,459.31 57.00,459.34 57.33,459.36 57.67,459.39 58.00,459.42 58.34,459.43 58.67,459.43 59.00,459.40 59.34,459.32 59.67,459.21 60.00,459.08 60.33,458.95 60.67,458.84 61.00,458.78 61.33,458.78 61.66,458.81 62.00,458.86 62.33,458.93 62.67,458.99 63.00,459.05 63.33,459.11 63.67,459.18 64.00,459.25 64.33,459.31 64.67,459.37 65.00,459.40 65.33,459.41 65.67,459.42 66.00,459.41 66.34,459.39 66.67,459.36 67.00,459.31 67.34,459.22 67.67,459.11 68.00,458.98 68.33,458.86 68.66,458.75 69.00,458.67 69.33,458.63 69.66,458.61 70.00,458.61 70.33,458.62 70.67,458.64 71.00,458.66 71.33,458.70 71.67,458.76 72.00,458.82 72.33,458.89 72.67,458.93 73.00,458.95 73.33,458.92 73.67,458.87 74.00,458.79 74.33,458.71 74.67,458.65 75.00,458.62 75.33,458.62 75.67,458.64 76.00,458.68 76.33,458.72 76.67,458.75 77.00,458.77 77.33,458.75 77.67,458.71 78.00,458.67 78.34,458.63 78.67,458.61 79.00,458.62 79.33,458.67 79.67,458.76 80.00,458.87 80.33,458.98 80.67,459.08 81.00,459.15 81.33,459.19 81.66,459.22 82.00,459.23 82.33,459.24 82.67,459.24 83.00,459.26 83.33,459.28 83.67,459.32 84.00,459.35 84.34,459.38 84.67,459.38 85.00,459.36 85.34,459.28 85.67,459.15 86.00,459.00 86.33,458.85 86.67,458.74 87.00,458.69 87.33,458.71 87.66,458.79 88.00,458.90 88.33,459.02 88.66,459.13 89.00,459.19 89.33,459.22 89.67,459.23 90.00,459.23 90.33,459.21 90.67,459.18 91.00,459.14 91.34,459.08 91.67,458.98 92.00,458.87 92.34,458.77 92.67,458.70 93.00,458.68 93.33,458.73 93.67,458.84 94.00,458.98 94.33,459.12 94.66,459.25 95.00,459.34 95.33,459.40 95.66,459.44 96.00,459.46 96.34,459.47 96.67,459.46 97.00,459.42 97.34,459.34 97.67,459.20 98.00,459.05 98.34,458.90 98.67,458.79 99.00,458.75 99.33,458.79 99.67,458.91 100.00,459.07 100.33,459.22 100.67,459.35 101.00,459.41 101.33,459.38 101.66,459.30 102.00,459.19 102.33,459.07 102.66,458.97 103.00,458.91 103.33,458.88 103.67,458.88 104.00,458.89 104.33,458.91 104.67,458.95 105.00,458.99 105.33,459.05 105.67,459.13 106.00,459.23 106.33,459.32 106.67,459.40 107.00,459.44 107.33,459.46 107.67,459.45 108.00,459.43 108.34,459.40 108.67,459.36 109.00,459.30 109.34,459.22 109.67,459.10 110.00,458.97 110.33,458.85 110.67,458.75 111.00,458.70 111.33,458.69 111.66,458.72 112.00,458.78 112.33,458.84 112.67,458.90 113.00,458.94 113.33,458.96 113.67,458.98 114.00,459.00 114.33,459.01 114.67,459.02 115.00,459.01 115.33,459.00 115.67,458.98 116.00,458.95 116.33,458.91 116.67,458.88 117.00,458.86 117.33,458.83 117.67,458.80 118.00,458.77 118.33,458.75 118.67,458.73 119.00,458.73 119.33,458.73 119.67,458.74 120.00,458.75 120.33,458.77 120.67,458.80 121.00,458.84 121.33,458.89 121.67,458.98 122.00,459.06 122.34,459.14 122.67,459.19 123.00,459.20 123.33,459.14 123.67,459.02 124.00,458.88 124.33,458.73 124.67,458.62 125.00,458.57 125.33,458.59 125.66,458.67 126.00,458.78 126.33,458.89 126.66,458.99 127.00,459.05 127.33,459.07 127.67,459.07 128.00,459.05 128.33,459.02 128.67,458.99 129.00,458.95 129.33,458.89 129.67,458.82 130.00,458.73 130.33,458.65 130.67,458.59 131.00,458.57 131.33,458.58 131.67,458.61 132.00,458.67 132.33,458.73 132.67,458.79 133.00,458.85 133.33,458.90 133.67,458.95 134.00,459.00 134.33,459.05 134.67,459.09 135.00,459.11 135.33,459.12 135.67,459.12 136.00,459.10 136.33,459.08 136.67,459.05 137.00,459.01 137.34,458.95 137.67,458.86 138.00,458.75 138.34,458.67 138.67,458.61 139.00,458.61 139.34,458.68 139.67,458.83 140.00,459.01 140.33,459.19 140.66,459.34 141.00,459.44 141.33,459.46 141.66,459.44 142.00,459.39 142.33,459.33 142.67,459.28 143.00,459.26 143.33,459.28 143.67,459.32 144.00,459.38 144.34,459.42 144.67,459.45 145.00,459.42 145.34,459.34 145.67,459.20 146.00,459.04 146.33,458.87 146.66,458.73 147.00,458.64 147.33,458.62 147.66,458.64 148.00,458.68 148.33,458.73 148.67,458.77 149.00,458.79 149.33,458.77 149.67,458.72 150.00,458.66 150.34,458.60 150.67,458.57 151.00,458.59 151.34,458.66 151.67,458.78 152.00,458.93 152.33,459.08 152.67,459.20 153.00,459.25 153.33,459.24 153.66,459.17 154.00,459.07 154.33,458.96 154.66,458.86 155.00,458.79 155.33,458.75 155.67,458.71 156.00,458.69 156.33,458.67 156.67,458.66 157.00,458.67 157.33,458.69 157.67,458.72 158.00,458.76 158.33,458.81 158.67,458.87 159.00,458.93 159.33,459.00 159.67,459.08 160.00,459.17 160.33,459.26 160.67,459.33 161.00,459.37 161.33,459.39 161.67,459.40 162.00,459.39 162.33,459.36 162.67,459.33 163.00,459.29 163.33,459.22 163.67,459.14 164.00,459.04 164.33,458.94 164.67,458.85 165.00,458.78 165.33,458.73 165.67,458.69 166.00,458.66 166.34,458.65 166.67,458.65 167.00,458.68 167.34,458.77 167.67,458.89 168.00,459.04 168.33,459.19 168.66,459.31 169.00,459.38 169.33,459.38 169.66,459.33 170.00,459.25 170.33,459.17 170.67,459.10 171.00,459.06 171.33,459.07 171.67,459.09 172.00,459.14 172.34,459.17 172.67,459.19 173.00,459.18 173.33,459.12 173.67,459.03 174.00,458.91 174.33,458.80 174.66,458.70 175.00,458.63 175.33,458.59 175.67,458.56 176.00,458.55 176.33,458.55 176.67,458.57 177.00,458.60 177.34,458.67 177.67,458.78 178.00,458.90 178.33,459.02 178.67,459.11 179.00,459.17 179.33,459.18 179.66,459.15 180.00,459.11 180.33,459.05 180.67,458.99 181.00,458.93 181.33,458.87 181.67,458.79 182.00,458.71 182.34,458.65 182.67,458.61 183.00,458.62 183.34,458.69 183.67,458.83 184.00,459.00 184.33,459.17 184.66,459.31 185.00,459.39 185.33,459.40 185.66,459.36 186.00,459.29 186.33,459.22 186.67,459.15 187.00,459.12 187.33,459.13 187.67,459.17 188.00,459.22 188.34,459.26 188.67,459.29 189.00,459.27 189.34,459.20 189.67,459.07 190.00,458.92 190.34,458.77 190.67,458.67 191.00,458.63 191.33,458.68 191.67,458.81 192.00,458.98 192.33,459.14 192.67,459.27 193.00,459.32 193.33,459.27 193.67,459.14 194.00,458.96 194.33,458.79 194.67,458.66 195.00,458.61 195.33,458.66 195.67,458.78 196.00,458.95 196.33,459.12 196.66,459.25 197.00,459.33 197.33,459.32 197.66,459.27 198.00,459.19 198.33,459.10 198.67,459.02 199.00,458.96 199.33,458.92 199.67,458.89 200.00,458.87 200.33,458.86 200.67,458.85 201.00,458.86 201.33,458.87 201.67,458.89 202.00,458.92 202.33,458.96 202.67,459.00 203.00,459.05 203.33,459.11 203.67,459.18 204.00,459.26 204.34,459.33 204.67,459.38 205.00,459.38 205.33,459.33 205.67,459.24 206.00,459.12 206.33,458.99 206.66,458.87 207.00,458.79 207.33,458.74 207.66,458.70 208.00,458.67 208.33,458.66 208.67,458.65 209.00,458.67 209.33,458.71 209.67,458.77 210.00,458.85 210.33,458.93 210.67,458.99 211.00,459.02 211.33,459.01 211.67,458.98 212.00,458.92 212.33,458.86 212.67,458.81 213.00,458.76 213.33,458.74 213.67,458.71 214.00,458.69 214.33,458.67 214.67,458.66 215.00,458.65 215.33,458.65 215.67,458.66 216.00,458.67 216.33,458.68 216.67,458.69 217.00,458.70 217.33,458.68 217.67,458.66 218.00,458.64 218.33,458.62 218.67,458.60 219.00,458.60 219.33,458.60 219.67,458.62 220.00,458.65 220.33,458.68 220.67,458.71 221.00,458.73 221.33,458.75 221.67,458.77 222.00,458.79 222.33,458.81 222.67,458.82 223.00,458.83 223.33,458.83 223.67,458.82 224.00,458.81 224.33,458.80 224.67,458.80 225.00,458.82 225.33,458.88 225.67,458.96 226.00,459.05 226.33,459.14 226.67,459.21 227.00,459.23 227.33,459.20 227.67,459.13 228.00,459.04 228.33,458.94 228.67,458.86 229.00,458.81 229.33,458.81 229.67,458.85 230.00,458.90 230.33,458.95 230.67,458.99 231.00,459.00 231.33,458.97 231.67,458.92 232.00,458.86 232.33,458.79 232.67,458.74 233.00,458.71 233.33,458.72 233.67,458.74 234.00,458.79 234.33,458.83 234.67,458.86 235.00,458.86 235.33,458.83 235.67,458.78 236.00,458.71 236.33,458.64 236.67,458.59 237.00,458.57 237.33,458.58 237.67,458.61 238.00,458.67 238.33,458.72 238.67,458.76 239.00,458.78 239.33,458.75 239.67,458.71 240.00,458.64 240.34,458.59 240.67,458.56 241.00,458.56 241.34,458.63 241.67,458.75 242.00,458.88 242.33,459.02 242.66,459.14 243.00,459.21 243.33,459.23 243.66,459.22 244.00,459.19 244.33,459.14 244.67,459.09 245.00,459.05 245.33,458.99 245.67,458.93 246.00,458.86 246.33,458.79 246.67,458.74 247.00,458.72 247.33,458.73 247.67,458.76 248.00,458.80 248.33,458.86 248.67,458.92 249.00,458.98 249.33,459.05 249.67,459.15 250.00,459.25 250.34,459.33 250.67,459.39 251.00,459.39 251.34,459.32 251.67,459.18 252.00,459.00 252.33,458.83 252.67,458.70 253.00,458.65 253.33,458.68 253.66,458.79 254.00,458.94 254.33,459.10 254.66,459.22 255.00,459.29 255.33,459.28 255.66,459.23 256.00,459.15 256.33,459.06 256.67,458.98 257.00,458.94 257.33,458.92 257.67,458.92 258.00,458.93 258.33,458.94 258.67,458.97 259.00,459.00 259.33,459.04 259.67,459.10 260.00,459.18 260.33,459.24 260.67,459.29 261.00,459.30 261.33,459.27 261.67,459.20 262.00,459.12 262.33,459.03 262.67,458.95 263.00,458.90 263.33,458.89 263.67,458.90 264.00,458.92 264.33,458.95 264.67,458.98 265.00,459.01 265.33,459.03 265.67,459.05 266.00,459.08 266.33,459.10 266.67,459.14 267.00,459.17 267.33,459.22 267.67,459.28 268.00,459.35 268.34,459.40 268.67,459.44 269.00,459.43 269.33,459.38 269.67,459.27 270.00,459.14 270.33,459.01 270.67,458.90 271.00,458.86 271.33,458.88 271.66,458.95 272.00,459.05 272.33,459.16 272.67,459.25 273.00,459.30 273.34,459.34 273.68,459.39 274.03,459.43 274.37,459.42 274.69,459.35 275.00,459.19 275.53,458.59 276.00,457.68 276.42,456.53 276.82,455.20 277.21,453.77 277.60,452.30 278.23,449.66 278.81,446.61 279.36,443.27 279.91,439.79 280.48,436.29 281.10,432.90 281.78,429.33 282.46,425.59 283.17,421.82 283.92,418.20 284.72,414.87 285.60,412.00 286.19,410.45 286.81,409.05 287.45,407.78 288.12,406.59 288.80,405.44 289.50,404.30 290.13,403.26 290.78,402.22 291.44,401.21 292.12,400.28 292.84,399.46 293.60,398.80 294.25,398.38 294.94,398.04 295.65,397.78 296.37,397.59 297.09,397.46 297.80,397.40 298.50,397.41 299.21,397.49 299.92,397.64 300.63,397.85 301.32,398.10 302.00,398.40 302.71,398.81 303.37,399.31 304.02,399.87 304.69,400.46 305.40,401.05 306.20,401.60 307.39,402.32 308.70,403.05 310.09,403.79 311.54,404.49 313.02,405.14 314.50,405.70 316.08,406.20 317.74,406.65 319.43,407.03 321.10,407.35 322.71,407.61 324.20,407.80 325.28,407.89 326.35,407.94 327.38,407.95 328.34,407.93 329.22,407.91 330.00,407.88 330.39,407.87 330.74,407.84 331.07,407.81 331.37,407.79 331.68,407.76 332.00,407.74 332.33,407.73 332.67,407.73 333.00,407.73 333.33,407.73 333.67,407.72 334.00,407.71 334.33,407.68 334.67,407.65 335.00,407.62 335.33,407.58 335.67,407.55 336.00,407.53 336.33,407.53 336.67,407.53 337.00,407.55 337.33,407.56 337.67,407.57 338.00,407.58 338.33,407.57 338.67,407.56 339.00,407.54 339.33,407.53 339.67,407.52 340.00,407.54 340.33,407.59 340.67,407.67 341.00,407.76 341.33,407.85 341.67,407.91 342.00,407.94 342.33,407.93 342.67,407.89 343.00,407.83 343.33,407.76 343.67,407.70 344.00,407.65 344.33,407.63 344.67,407.62 345.00,407.61 345.33,407.61 345.67,407.60 346.00,407.60 346.33,407.58 346.67,407.56 347.00,407.54 347.34,407.53 347.67,407.53 348.00,407.55 348.33,407.60 348.67,407.68 349.00,407.77 349.33,407.87 349.67,407.95 350.00,408.00 350.33,408.03 350.66,408.05 351.00,408.05 351.33,408.04 351.67,408.03 352.00,408.02 352.33,408.01 352.67,408.00 353.00,407.98 353.33,407.96 353.67,407.93 354.00,407.90 354.33,407.87 354.67,407.83 355.00,407.78 355.33,407.74 355.67,407.70 356.00,407.67 356.33,407.65 356.67,407.64 357.00,407.64 357.33,407.64 357.67,407.64 358.00,407.65 358.33,407.65 358.67,407.65 359.00,407.65 359.33,407.66 359.67,407.67 360.00,407.68 360.33,407.69 360.67,407.71 361.00,407.74 361.33,407.76 361.67,407.77 362.00,407.78 362.33,407.76 362.67,407.72 363.00,407.68 363.33,407.64 363.67,407.61 364.00,407.59 364.33,407.61 364.67,407.64 365.00,407.68 365.33,407.72 365.67,407.75 366.00,407.77 366.33,407.76 366.67,407.73 367.00,407.70 367.33,407.67 367.67,407.65 368.00,407.66 368.33,407.70 368.67,407.77 369.00,407.86 369.33,407.95 369.67,408.03 370.00,408.08 370.33,408.10 370.67,408.12 371.00,408.12 371.33,408.12 371.67,408.10 372.00,408.08 372.33,408.06 372.67,408.02 373.00,407.97 373.33,407.92 373.67,407.87 374.00,407.83 374.33,407.79 374.67,407.74 375.00,407.69 375.33,407.66 375.67,407.64 376.00,407.65 376.33,407.69 376.67,407.78 377.00,407.88 377.33,407.97 377.67,408.05 378.00,408.08 378.33,408.06 378.67,407.99 379.00,407.91 379.33,407.82 379.67,407.74 380.00,407.69 380.33,407.67 380.67,407.67 381.00,407.69 381.33,407.71 381.67,407.72 382.00,407.71 382.33,407.69 382.67,407.64 383.00,407.59 383.33,407.55 383.67,407.51 384.00,407.50 384.33,407.52 384.67,407.55 385.00,407.60 385.33,407.65 385.67,407.70 386.00,407.73 386.33,407.75 386.67,407.76 387.00,407.77 387.33,407.78 387.67,407.78 388.00,407.78 388.33,407.79 388.67,407.80 389.00,407.81 389.33,407.81 389.67,407.81 390.00,407.80 390.33,407.78 390.67,407.74 391.00,407.70 391.33,407.66 391.67,407.63 392.00,407.62 392.33,407.64 392.67,407.67 393.00,407.72 393.33,407.76 393.67,407.80 394.00,407.80 394.34,407.77 394.68,407.72 395.01,407.65 395.35,407.58 395.68,407.53 396.00,407.50 396.27,407.53 396.54,407.60 396.79,407.67 397.05,407.74 397.32,407.76 397.60,407.70 398.12,407.32 398.67,406.65 399.24,405.84 399.82,405.05 400.41,404.45 401.00,404.20 401.58,404.31 402.17,404.65 402.78,405.17 403.37,405.80 403.95,406.50 404.50,407.20 405.20,408.27 405.85,409.54 406.46,410.93 407.07,412.35 407.67,413.70 408.30,414.90 408.82,415.71 409.36,416.43 409.90,417.11 410.43,417.80 410.93,418.55 411.40,419.40 411.96,420.94 412.48,422.88 412.95,424.93 413.39,426.77 413.80,428.10 414.20,428.60 414.53,428.12 414.80,426.90 415.05,425.21 415.31,423.35 415.62,421.58 416.00,420.20 416.33,419.47 416.69,418.84 417.07,418.26 417.47,417.69 417.88,417.08 418.30,416.40 418.91,415.39 419.59,414.32 420.29,413.18 420.97,412.00 421.59,410.77 422.10,409.50 422.52,408.04 422.83,406.50 423.07,404.91 423.25,403.29 423.42,401.64 423.60,400.00 423.78,398.22 423.90,396.37 424.01,394.50 424.12,392.66 424.28,390.88 424.50,389.20 424.75,387.85 425.03,386.50 425.35,385.19 425.67,383.98 425.99,382.90 426.30,382.00 426.46,381.65 426.62,381.39 426.77,381.16 426.93,380.93 427.07,380.62 427.20,380.20 427.51,377.05 427.63,371.93 427.63,365.97 427.56,360.30 427.49,356.06 427.50,354.40 427.58,357.31 427.67,364.59 427.77,374.05 427.87,383.51 427.98,390.79 428.10,393.70 428.19,392.53 428.29,389.46 428.39,385.13 428.49,380.20 428.60,375.30 428.70,371.10 428.77,367.54 428.80,363.82 428.83,360.13 428.90,356.68 429.05,353.67 429.30,351.30 429.45,350.51 429.62,349.86 429.80,349.29 429.99,348.76 430.20,348.21 430.40,347.60 430.63,346.72 430.87,345.70 431.11,344.65 431.38,343.72 431.67,343.02 432.00,342.70 432.24,342.71 432.50,342.83 432.77,343.04 433.04,343.32 433.29,343.65 433.50,344.00 433.78,344.77 433.97,345.76 434.09,346.89 434.18,348.10 434.27,349.29 434.40,350.40 434.54,351.41 434.66,352.42 434.78,353.43 434.92,354.42 435.09,355.34 435.30,356.20 435.50,356.77 435.72,357.27 435.96,357.73 436.21,358.21 436.46,358.75 436.70,359.40 437.15,360.90 437.60,362.70 438.06,364.70 438.51,366.83 438.96,368.99 439.40,371.10 439.88,373.40 440.37,375.75 440.85,378.15 441.31,380.59 441.73,383.07 442.10,385.60 442.40,388.47 442.59,391.45 442.73,394.48 442.89,397.51 443.13,400.50 443.50,403.40 443.99,406.05 444.57,408.67 445.21,411.25 445.90,413.79 446.61,416.27 447.30,418.70 447.89,420.93 448.46,423.23 449.04,425.48 449.67,427.59 450.37,429.43 451.20,430.90 451.77,431.63 452.37,432.29 453.00,432.85 453.66,433.28 454.33,433.58 455.00,433.70 455.73,433.59 456.48,433.23 457.25,432.71 458.03,432.10 458.81,431.47 459.60,430.90 460.48,430.34 461.38,429.77 462.29,429.19 463.19,428.57 464.06,427.88 464.90,427.10 465.80,426.00 466.61,424.72 467.40,423.34 468.20,421.98 469.05,420.73 470.00,419.70 470.92,418.97 471.91,418.35 472.93,417.80 473.98,417.34 475.05,416.94 476.10,416.60 477.08,416.36 478.06,416.20 479.05,416.10 480.06,416.04 481.11,415.98 482.20,415.90 483.67,415.81 485.28,415.76 486.95,415.73 488.58,415.66 490.09,415.53 491.40,415.30 492.14,415.11 492.80,414.91 493.40,414.68 493.98,414.40 494.57,414.05 495.20,413.60 496.31,412.60 497.47,411.31 498.66,409.83 499.85,408.25 501.00,406.67 502.10,405.20 503.05,403.87 503.95,402.48 504.83,401.10 505.70,399.78 506.58,398.56 507.50,397.50 508.25,396.75 509.03,396.02 509.81,395.35 510.58,394.79 511.32,394.39 512.00,394.20 512.42,394.18 512.82,394.23 513.20,394.34 513.57,394.54 513.94,394.82 514.30,395.20 515.34,397.13 516.32,400.18 517.26,403.96 518.13,408.10 518.95,412.21 519.70,415.90 520.32,419.01 520.87,422.10 521.36,425.16 521.83,428.19 522.30,431.21 522.80,434.20 523.31,437.02 523.83,439.79 524.35,442.53 524.86,445.29 525.35,448.10 525.80,451.00 526.20,454.62 526.50,458.69 526.76,462.82 527.07,466.62 527.49,469.71 528.10,471.70 528.31,472.05 528.50,472.31 528.71,472.51 528.95,472.66 529.24,472.78 529.60,472.90 531.08,473.09 533.22,473.07 535.70,472.88 538.19,472.56 540.37,472.15 541.90,471.70 542.33,471.51 542.69,471.33 542.98,471.13 543.24,470.89 543.47,470.59 543.70,470.20 544.07,468.80 544.21,466.78 544.25,464.45 544.29,462.11 544.47,460.09 544.90,458.70 545.23,458.31 545.62,458.06 546.04,457.89 546.47,457.73 546.86,457.52 547.20,457.20 547.55,456.50 547.81,455.56 548.03,454.53 548.23,453.58 548.44,452.89 548.70,452.60 548.95,452.74 549.21,453.15 549.48,453.74 549.75,454.40 550.03,455.05 550.30,455.60 550.52,456.01 550.72,456.42 550.91,456.82 551.14,457.21 551.43,457.57 551.80,457.90 552.61,458.37 553.62,458.77 554.79,459.12 556.06,459.41 557.38,459.67 558.70,459.90 560.52,460.18 562.60,460.44 564.76,460.64 566.83,460.75 568.64,460.71 570.00,460.50 570.45,460.31 570.81,460.06 571.12,459.78 571.39,459.50 571.68,459.26 572.00,459.09 572.32,458.99 572.65,458.94 572.99,458.92 573.33,458.91 573.66,458.92 574.00,458.93 574.33,458.96 574.67,459.01 575.00,459.08 575.33,459.14 575.67,459.19 576.00,459.21 576.33,459.19 576.67,459.14 577.00,459.07 577.33,458.99 577.67,458.93 578.00,458.89 578.33,458.86 578.67,458.85 579.00,458.84 579.33,458.84 579.67,458.85 580.00,458.87 580.33,458.90 580.67,458.95 581.00,459.00 581.33,459.05 581.67,459.10 582.00,459.12 582.33,459.13 582.67,459.11 583.00,459.09 583.33,459.06 583.67,459.05 584.00,459.06 584.33,459.09 584.67,459.15 585.00,459.22 585.33,459.28 585.67,459.34 586.00,459.38 586.33,459.39 586.67,459.38 587.00,459.36 587.33,459.34 587.67,459.32 588.00,459.33 588.33,459.35 588.67,459.38 589.00,459.43 589.33,459.47 589.67,459.51 590.00,459.53 590.33,459.53 590.67,459.51 591.00,459.49 591.33,459.47 591.67,459.45 592.00,459.44 592.33,459.44 592.67,459.45 593.00,459.45 593.33,459.46 593.67,459.48 594.00,459.49 594.33,459.52 594.67,459.56 595.00,459.60 595.33,459.63 595.67,459.65 596.00,459.64 596.33,459.60 596.67,459.52 597.00,459.43 597.33,459.34 597.67,459.26 598.00,459.20 598.33,459.16 598.67,459.13 599.00,459.11 599.34,459.10 599.67,459.11 600.00,459.14 600.34,459.22 600.67,459.34 601.00,459.48 601.34,459.61 601.67,459.71 602.00,459.74 602.33,459.67 602.67,459.54 603.00,459.36 603.33,459.19 603.66,459.05 604.00,458.98 604.33,459.01 604.66,459.09 605.00,459.20 605.33,459.33 605.66,459.44 606.00,459.50 606.33,459.53 606.67,459.54 607.00,459.53 607.33,459.51 607.67,459.47 608.00,459.43 608.34,459.35 608.67,459.24 609.00,459.11 609.34,459.00 609.67,458.91 610.00,458.89 610.33,458.94 610.67,459.06 611.00,459.21 611.33,459.37 611.66,459.51 612.00,459.60 612.33,459.65 612.66,459.68 613.00,459.68 613.33,459.68 613.67,459.67 614.00,459.65 614.33,459.63 614.67,459.58 615.00,459.53 615.33,459.48 615.67,459.44 616.00,459.41 616.33,459.41 616.67,459.42 617.00,459.44 617.33,459.47 617.67,459.49 618.00,459.51 618.33,459.53 618.67,459.56 619.00,459.59 619.34,459.61 619.67,459.61 620.00,459.58 620.34,459.51 620.67,459.39 621.00,459.26 621.33,459.13 621.67,459.03 622.00,458.98 622.33,458.98 622.66,459.03 623.00,459.11 623.33,459.20 623.67,459.27 624.00,459.32 624.33,459.34 624.67,459.33 625.00,459.32 625.33,459.30 625.67,459.29 626.00,459.30 626.33,459.34 626.67,459.39 627.00,459.45 627.33,459.51 627.67,459.57 628.00,459.60 628.33,459.62 628.67,459.61 629.00,459.61 629.33,459.59 629.67,459.58 630.00,459.57 630.33,459.58 630.67,459.59 631.00,459.60 631.33,459.60 631.67,459.60 632.00,459.59 632.33,459.57 632.67,459.52 633.00,459.47 633.33,459.42 633.67,459.39 634.00,459.38 634.33,459.40 634.67,459.45 635.00,459.51 635.33,459.58 635.67,459.63 636.00,459.65 636.33,459.65 636.67,459.62 637.00,459.58 637.33,459.53 637.67,459.49 638.00,459.46 638.33,459.46 638.67,459.47 639.00,459.48 639.33,459.49 639.67,459.49 640.00,459.47 640.33,459.43 640.67,459.36 641.00,459.28 641.33,459.19 641.67,459.12 642.00,459.06 642.33,459.01 642.67,458.97 643.00,458.94 643.33,458.91 643.67,458.89 644.00,458.88 644.33,458.88 644.67,458.88 645.00,458.90 645.33,458.92 645.67,458.94 646.00,458.97 646.33,459.00 646.67,459.05 647.00,459.09 647.33,459.13 647.67,459.16 648.00,459.17 648.33,459.15 648.67,459.10 649.00,459.03 649.34,458.97 649.67,458.94 650.00,458.94 650.34,459.01 650.67,459.13 651.00,459.27 651.33,459.42 651.66,459.54 652.00,459.60 652.33,459.61 652.66,459.57 653.00,459.51 653.33,459.45 653.67,459.39 654.00,459.35 654.33,459.35 654.67,459.35 655.00,459.37 655.33,459.39 655.67,459.40 656.00,459.41 656.33,459.42 656.67,459.42 657.00,459.42 657.33,459.41 657.67,459.41 658.00,459.41 658.33,459.42 658.67,459.43 659.00,459.45 659.33,459.46 659.67,459.47 660.00,459.46 660.33,459.45 660.67,459.43 661.00,459.41 661.33,459.38 661.67,459.34 662.00,459.29 662.33,459.22 662.67,459.12 663.00,459.02 663.34,458.92 663.67,458.86 664.00,458.85 664.33,458.91 664.67,459.03 665.00,459.19 665.33,459.34 665.66,459.48 666.00,459.57 666.33,459.60 666.66,459.61 667.00,459.60 667.33,459.58 667.67,459.55 668.00,459.52 668.33,459.49 668.67,459.45 669.00,459.41 669.33,459.36 669.67,459.33 670.00,459.30 670.33,459.29 670.67,459.29 671.00,459.30 671.33,459.31 671.67,459.32 672.00,459.33 672.33,459.35 672.67,459.39 673.00,459.42 673.34,459.45 673.67,459.46 674.00,459.44 674.34,459.38 674.67,459.27 675.00,459.15 675.34,459.03 675.67,458.94 676.00,458.91 676.33,458.96 676.67,459.06 677.00,459.21 677.33,459.35 677.67,459.46 678.00,459.51 678.33,459.50 678.66,459.43 679.00,459.34 679.33,459.24 679.67,459.15 680.00,459.08 680.33,459.03 680.67,458.99 681.00,458.96 681.33,458.94 681.67,458.92 682.00,458.92 682.33,458.92 682.67,458.94 683.00,458.97 683.33,459.00 683.67,459.04 684.00,459.09 684.33,459.15 684.67,459.24 685.00,459.34 685.33,459.42 685.67,459.49 686.00,459.51 686.33,459.47 686.67,459.38 687.00,459.27 687.33,459.15 687.67,459.07 688.00,459.03 688.33,459.06 688.67,459.13 689.00,459.23 689.33,459.34 689.67,459.44 690.00,459.52 690.33,459.57 690.67,459.63 691.00,459.68 691.33,459.71 691.67,459.73 692.00,459.73 692.33,459.69 692.67,459.62 693.00,459.53 693.33,459.44 693.67,459.36 694.00,459.29 694.33,459.26 694.67,459.23 695.00,459.21 695.33,459.20 695.67,459.20 696.00,459.19 696.33,459.20 696.67,459.21 697.00,459.22 697.33,459.24 697.67,459.26 698.00,459.28 698.33,459.31 698.67,459.34 699.00,459.37 699.33,459.41 699.67,459.44 700.00,459.47 700.33,459.49 700.67,459.51 701.00,459.52 701.33,459.53 701.67,459.54 702.00,459.54 702.33,459.53 702.67,459.50 703.00,459.48 703.33,459.45 703.67,459.42 704.00,459.41 704.33,459.41 704.67,459.42 705.00,459.44 705.34,459.45 705.67,459.45 706.00,459.43 706.33,459.37 706.67,459.28 707.00,459.17 707.33,459.07 707.67,458.98 708.00,458.92 708.33,458.90 708.66,458.90 709.00,458.91 709.33,458.94 709.67,458.96 710.00,458.98 710.33,458.99 710.67,459.00 711.00,459.01 711.34,459.02 711.67,459.04 712.00,459.08 712.33,459.14 712.67,459.23 713.00,459.33 713.33,459.42 713.67,459.49 714.00,459.52 714.33,459.49 714.67,459.43 715.00,459.33 715.33,459.24 715.67,459.16 716.00,459.12 716.33,459.14 716.67,459.18 717.00,459.25 717.33,459.31 717.67,459.36 718.00,459.36 718.33,459.31 718.67,459.23 719.00,459.12 719.33,459.01 719.67,458.92 720.00,458.86 720.33,458.84 720.66,458.83 721.00,458.84 721.33,458.86 721.67,458.88 722.00,458.90 722.33,458.93 722.67,458.95 723.00,458.98 723.33,459.01 723.67,459.05 724.00,459.09 724.33,459.15 724.67,459.21 725.00,459.28 725.33,459.35 725.67,459.41 726.00,459.45 726.33,459.48 726.67,459.49 727.00,459.49 727.33,459.48 727.67,459.48 728.00,459.47 728.33,459.48 728.67,459.48 729.00,459.49 729.33,459.49 729.67,459.48 730.00,459.46 730.33,459.41 730.67,459.35 731.00,459.27 731.33,459.20 731.67,459.14 732.00,459.11 732.33,459.12 732.67,459.15 733.00,459.19 733.33,459.25 733.67,459.29 734.00,459.31 734.33,459.32 734.67,459.32 735.00,459.30 735.33,459.29 735.67,459.28 736.00,459.27 736.33,459.27 736.67,459.28 737.00,459.29 737.33,459.29 737.67,459.29 738.00,459.27 738.33,459.22 738.67,459.15 739.00,459.07 739.34,459.00 739.67,458.96 740.00,458.96 740.34,459.03 740.67,459.16 741.00,459.32 741.33,459.48 741.67,459.60 742.00,459.65 742.33,459.61 742.67,459.49 743.00,459.34 743.33,459.19 743.67,459.07 744.00,459.03 744.33,459.08 744.67,459.19 745.00,459.34 745.33,459.50 745.66,459.64 746.00,459.73 746.33,459.77 746.67,459.80 747.00,459.80 747.34,459.79 747.67,459.75 748.00,459.69 748.34,459.59 748.67,459.43 749.00,459.25 749.33,459.08 749.66,458.94 750.00,458.87 750.33,458.86 750.66,458.91 751.00,459.00 751.33,459.09 751.67,459.19 752.00,459.26 752.33,459.32 752.67,459.38 753.00,459.44 753.33,459.50 753.67,459.55 754.00,459.59 754.33,459.63 754.67,459.67 755.00,459.70 755.33,459.73 755.67,459.74 756.00,459.72 756.33,459.68 756.67,459.60 757.00,459.51 757.33,459.41 757.67,459.32 758.00,459.25 758.33,459.21 758.66,459.17 759.00,459.15 759.33,459.13 759.67,459.11 760.00,459.09 760.33,459.07 760.67,459.04 761.00,459.02 761.34,459.00 761.67,459.01 762.00,459.04 762.34,459.12 762.67,459.25 763.00,459.41 763.34,459.55 763.67,459.66 764.00,459.70 764.33,459.66 764.67,459.54 765.00,459.39 765.33,459.23 765.66,459.11 766.00,459.04 766.33,459.05 766.66,459.11 767.00,459.19 767.33,459.28 767.67,459.35 768.00,459.37 768.33,459.34 768.67,459.27 769.00,459.17 769.33,459.08 769.67,459.01 770.00,458.98 770.33,458.99 770.67,459.04 771.00,459.10 771.33,459.18 771.67,459.25 772.00,459.32 772.33,459.40 772.67,459.49 773.00,459.58 773.34,459.66 773.67,459.71 774.00,459.71 774.34,459.63 774.67,459.50 775.00,459.32 775.33,459.16 775.67,459.03 776.00,458.97 776.33,459.01 776.66,459.11 777.00,459.25 777.33,459.40 777.66,459.52 778.00,459.59 778.33,459.59 778.66,459.54 779.00,459.46 779.33,459.39 779.67,459.33 780.00,459.31 780.33,459.33 780.67,459.39 781.00,459.47 781.33,459.55 781.67,459.61 782.00,459.65 782.33,459.65 782.67,459.64 783.00,459.61 783.33,459.58 783.67,459.53 784.00,459.48 784.33,459.42 784.67,459.32 785.00,459.22 785.34,459.13 785.67,459.07 786.00,459.06 786.33,459.11 786.67,459.22 787.00,459.35 787.33,459.49 787.67,459.60 788.00,459.66 788.33,459.65 788.66,459.61 789.00,459.54 789.33,459.45 789.67,459.36 790.00,459.29 790.33,459.22 790.67,459.14 791.00,459.06 791.33,458.98 791.67,458.92 792.00,458.87 792.33,458.84 792.67,458.82 793.00,458.81 793.33,458.81 793.67,458.83 794.00,458.85 794.33,458.91 794.67,458.98 795.00,459.07 795.33,459.16 795.67,459.24 796.00,459.29 796.33,459.31 796.67,459.32 797.00,459.31 797.33,459.29 797.67,459.27 798.00,459.26 798.33,459.24 798.67,459.22 799.00,459.20 799.33,459.17 799.67,459.15 800.00,459.12 800.33,459.09 800.67,459.06 801.00,459.03 801.33,459.00 801.67,458.98 802.00,458.98 802.33,458.99 802.67,459.02 803.00,459.06 803.33,459.10 803.67,459.14 804.00,459.16 804.33,459.16 804.67,459.15 805.00,459.13 805.34,459.11 805.67,459.11 806.00,459.13 806.34,459.20 806.67,459.30 807.00,459.41 807.34,459.52 807.67,459.59 808.00,459.61 808.34,459.54 808.67,459.39 809.00,459.22 809.33,459.04 809.67,458.91 810.00,458.85 810.33,458.89 810.66,458.99 811.00,459.14 811.33,459.29 811.66,459.43 812.00,459.53 812.33,459.58 812.66,459.62 813.00,459.64 813.33,459.65 813.67,459.64 814.00,459.61 814.34,459.52 814.67,459.39 815.00,459.24 815.34,459.10 815.67,459.00 816.00,458.96 816.33,459.01 816.67,459.13 817.00,459.29 817.33,459.46 817.66,459.60 818.00,459.68 818.33,459.70 818.66,459.67 819.00,459.62 819.33,459.56 819.67,459.51 820.00,459.49 820.33,459.51 820.67,459.55 821.00,459.60 821.34,459.64 821.67,459.67 822.00,459.66 822.33,459.60 822.67,459.51 823.00,459.39 823.33,459.27 823.66,459.17 824.00,459.11 824.33,459.09 824.66,459.09 825.00,459.11 825.33,459.14 825.67,459.17 826.00,459.18 826.33,459.19 826.67,459.18 827.00,459.17 827.34,459.16 827.67,459.17 828.00,459.20 828.34,459.27 828.67,459.38 829.00,459.50 829.33,459.62 829.67,459.71 830.00,459.75 830.33,459.74 830.66,459.69 831.00,459.61 831.33,459.52 831.67,459.44 832.00,459.38 832.33,459.33 832.67,459.29 833.00,459.25 833.33,459.22 833.67,459.19 834.00,459.17 834.33,459.17 834.67,459.18 835.00,459.20 835.33,459.22 835.67,459.23 836.00,459.24 836.33,459.22 836.67,459.21 837.00,459.18 837.33,459.16 837.67,459.13 838.00,459.10 838.33,459.06 838.67,459.03 839.00,458.98 839.33,458.95 839.67,458.91 840.00,458.89 840.33,458.88 840.67,458.87 841.00,458.87 841.34,458.87 841.67,458.90 842.00,458.94 842.34,459.03 842.67,459.16 843.00,459.31 843.33,459.44 843.67,459.55 844.00,459.60 844.33,459.57 844.67,459.48 845.00,459.36 845.33,459.23 845.67,459.14 846.00,459.11 846.38,459.16 846.81,459.26 847.25,459.40 847.63,459.54 847.90,459.65 848.00,459.69" fill="none" stroke="#000" stroke-width="1.6" stroke-linejoin="round" stroke-linecap="round"/>
<polyline clip-path="url(#c2)" points="53.00,677.27 53.10,677.27 53.37,677.27 53.75,677.27 54.19,677.27 54.62,677.27 55.00,677.29 55.33,677.32 55.67,677.37 56.00,677.42 56.33,677.47 56.67,677.50 57.00,677.51 57.33,677.49 57.67,677.43 58.00,677.37 58.33,677.30 58.67,677.25 59.00,677.22 59.33,677.22 59.67,677.23 60.00,677.25 60.34,677.29 60.67,677.33 61.00,677.39 61.33,677.46 61.67,677.56 62.00,677.66 62.33,677.77 62.67,677.85 63.00,677.91 63.33,677.93 63.66,677.93 64.00,677.91 64.33,677.89 64.67,677.86 65.00,677.85 65.33,677.84 65.67,677.83 66.00,677.82 66.33,677.81 66.67,677.80 67.00,677.78 67.33,677.75 67.67,677.72 68.00,677.68 68.33,677.64 68.67,677.62 69.00,677.62 69.33,677.64 69.67,677.68 70.00,677.73 70.33,677.79 70.67,677.84 71.00,677.87 71.33,677.89 71.67,677.91 72.00,677.92 72.33,677.92 72.67,677.92 73.00,677.90 73.33,677.85 73.67,677.79 74.00,677.71 74.33,677.64 74.67,677.58 75.00,677.54 75.33,677.55 75.67,677.59 76.00,677.64 76.34,677.68 76.67,677.71 77.00,677.70 77.34,677.63 77.67,677.51 78.00,677.37 78.33,677.23 78.67,677.13 79.00,677.09 79.33,677.14 79.67,677.24 80.00,677.38 80.33,677.52 80.66,677.64 81.00,677.71 81.33,677.71 81.66,677.67 82.00,677.60 82.33,677.53 82.67,677.48 83.00,677.46 83.33,677.47 83.67,677.52 84.00,677.58 84.33,677.64 84.67,677.70 85.00,677.73 85.33,677.73 85.67,677.73 86.00,677.72 86.33,677.69 86.67,677.66 87.00,677.63 87.33,677.59 87.67,677.54 88.00,677.48 88.33,677.42 88.67,677.36 89.00,677.31 89.33,677.25 89.67,677.19 90.00,677.13 90.34,677.09 90.67,677.07 91.00,677.09 91.34,677.18 91.67,677.34 92.00,677.52 92.34,677.70 92.67,677.83 93.00,677.88 93.33,677.84 93.66,677.72 94.00,677.55 94.33,677.38 94.66,677.24 95.00,677.16 95.33,677.16 95.66,677.21 96.00,677.28 96.33,677.37 96.67,677.44 97.00,677.47 97.33,677.48 97.67,677.47 98.00,677.44 98.33,677.41 98.67,677.38 99.00,677.36 99.33,677.34 99.67,677.32 100.00,677.31 100.33,677.30 100.67,677.30 101.00,677.32 101.33,677.36 101.67,677.42 102.00,677.50 102.33,677.58 102.67,677.65 103.00,677.72 103.33,677.77 103.67,677.83 104.00,677.89 104.34,677.93 104.67,677.94 105.00,677.93 105.34,677.86 105.67,677.74 106.00,677.60 106.33,677.46 106.67,677.34 107.00,677.28 107.33,677.29 107.66,677.36 108.00,677.44 108.33,677.54 108.67,677.61 109.00,677.64 109.33,677.62 109.67,677.56 110.00,677.49 110.33,677.41 110.67,677.35 111.00,677.32 111.33,677.33 111.67,677.37 112.00,677.43 112.33,677.48 112.67,677.53 113.00,677.55 113.33,677.55 113.67,677.53 114.00,677.51 114.33,677.47 114.67,677.44 115.00,677.40 115.33,677.37 115.67,677.33 116.00,677.29 116.33,677.26 116.67,677.22 117.00,677.20 117.33,677.19 117.67,677.18 118.00,677.18 118.33,677.19 118.67,677.19 119.00,677.20 119.33,677.19 119.67,677.18 120.00,677.18 120.34,677.18 120.67,677.20 121.00,677.24 121.34,677.32 121.67,677.44 122.00,677.58 122.33,677.71 122.67,677.81 123.00,677.87 123.33,677.86 123.66,677.81 124.00,677.74 124.33,677.65 124.67,677.56 125.00,677.50 125.33,677.44 125.67,677.37 126.00,677.31 126.34,677.26 126.67,677.24 127.00,677.25 127.34,677.31 127.67,677.41 128.00,677.54 128.33,677.67 128.66,677.78 129.00,677.87 129.33,677.92 129.66,677.95 130.00,677.97 130.33,677.98 130.67,677.97 131.00,677.95 131.33,677.90 131.67,677.82 132.00,677.72 132.33,677.62 132.67,677.53 133.00,677.45 133.33,677.39 133.66,677.33 134.00,677.28 134.33,677.24 134.67,677.20 135.00,677.18 135.33,677.17 135.67,677.17 136.00,677.19 136.33,677.21 136.67,677.22 137.00,677.22 137.33,677.21 137.67,677.19 138.00,677.17 138.33,677.14 138.67,677.13 139.00,677.13 139.33,677.16 139.67,677.20 140.00,677.25 140.33,677.30 140.67,677.34 141.00,677.36 141.33,677.34 141.67,677.30 142.00,677.25 142.33,677.20 142.67,677.15 143.00,677.13 143.33,677.13 143.67,677.15 144.00,677.18 144.33,677.22 144.67,677.25 145.00,677.27 145.33,677.27 145.67,677.27 146.00,677.26 146.33,677.26 146.67,677.27 147.00,677.28 147.33,677.31 147.67,677.36 148.00,677.41 148.33,677.46 148.67,677.51 149.00,677.56 149.33,677.61 149.67,677.67 150.00,677.73 150.33,677.78 150.67,677.82 151.00,677.85 151.33,677.85 151.67,677.84 152.00,677.82 152.33,677.79 152.67,677.76 153.00,677.72 153.33,677.68 153.67,677.63 154.00,677.57 154.33,677.51 154.67,677.46 155.00,677.42 155.33,677.40 155.67,677.40 156.00,677.40 156.33,677.40 156.67,677.41 157.00,677.42 157.33,677.44 157.67,677.46 158.00,677.48 158.33,677.50 158.67,677.52 159.00,677.52 159.33,677.51 159.67,677.49 160.00,677.46 160.33,677.43 160.67,677.41 161.00,677.39 161.33,677.38 161.67,677.38 162.00,677.38 162.33,677.38 162.67,677.37 163.00,677.35 163.33,677.32 163.67,677.27 164.00,677.22 164.33,677.16 164.67,677.12 165.00,677.11 165.33,677.11 165.67,677.12 166.00,677.15 166.34,677.19 166.67,677.24 167.00,677.30 167.34,677.39 167.67,677.53 168.00,677.67 168.34,677.80 168.67,677.89 169.00,677.92 169.33,677.86 169.67,677.73 170.00,677.56 170.33,677.38 170.66,677.24 171.00,677.16 171.33,677.16 171.66,677.21 172.00,677.28 172.33,677.37 172.67,677.45 173.00,677.50 173.33,677.53 173.67,677.55 174.00,677.57 174.33,677.58 174.67,677.59 175.00,677.62 175.33,677.66 175.67,677.71 176.00,677.76 176.34,677.81 176.67,677.84 177.00,677.83 177.33,677.77 177.67,677.67 178.00,677.55 178.33,677.42 178.66,677.31 179.00,677.24 179.33,677.22 179.66,677.22 180.00,677.24 180.33,677.26 180.67,677.28 181.00,677.29 181.33,677.29 181.67,677.29 182.00,677.28 182.33,677.27 182.67,677.27 183.00,677.27 183.33,677.29 183.67,677.31 184.00,677.34 184.33,677.37 184.67,677.39 185.00,677.41 185.33,677.42 185.67,677.42 186.00,677.41 186.34,677.41 186.67,677.42 187.00,677.45 187.33,677.51 187.67,677.59 188.00,677.69 188.33,677.78 188.67,677.86 189.00,677.91 189.33,677.92 189.66,677.91 190.00,677.89 190.33,677.86 190.67,677.83 191.00,677.81 191.33,677.82 191.67,677.84 192.00,677.86 192.34,677.88 192.67,677.87 193.00,677.84 193.34,677.75 193.67,677.61 194.00,677.45 194.33,677.30 194.66,677.16 195.00,677.07 195.33,677.02 195.66,677.00 196.00,676.99 196.33,677.01 196.67,677.04 197.00,677.08 197.34,677.15 197.67,677.25 198.00,677.37 198.33,677.50 198.66,677.61 199.00,677.69 199.33,677.75 199.66,677.80 200.00,677.83 200.33,677.86 200.67,677.86 201.00,677.86 201.33,677.82 201.67,677.75 202.00,677.67 202.33,677.59 202.67,677.52 203.00,677.48 203.33,677.47 203.67,677.50 204.00,677.54 204.34,677.57 204.67,677.59 205.00,677.58 205.34,677.52 205.67,677.42 206.00,677.30 206.33,677.18 206.67,677.09 207.00,677.05 207.33,677.06 207.67,677.10 208.00,677.16 208.33,677.24 208.67,677.33 209.00,677.40 209.33,677.48 209.67,677.57 210.00,677.67 210.33,677.76 210.67,677.84 211.00,677.88 211.33,677.90 211.66,677.89 212.00,677.87 212.33,677.84 212.67,677.81 213.00,677.79 213.33,677.79 213.67,677.79 214.00,677.79 214.33,677.80 214.67,677.81 215.00,677.82 215.33,677.84 215.67,677.88 216.00,677.91 216.34,677.94 216.67,677.95 217.00,677.93 217.34,677.85 217.67,677.75 218.00,677.61 218.33,677.48 218.66,677.36 219.00,677.27 219.33,677.22 219.66,677.19 220.00,677.17 220.33,677.16 220.67,677.15 221.00,677.15 221.33,677.14 221.67,677.14 222.00,677.14 222.33,677.15 222.67,677.16 223.00,677.19 223.33,677.23 223.67,677.28 224.00,677.35 224.33,677.41 224.67,677.47 225.00,677.52 225.33,677.55 225.67,677.58 226.00,677.60 226.33,677.62 226.67,677.64 227.00,677.66 227.33,677.70 227.67,677.75 228.00,677.80 228.33,677.85 228.67,677.88 229.00,677.90 229.33,677.89 229.67,677.86 230.00,677.82 230.33,677.77 230.67,677.73 231.00,677.70 231.33,677.68 231.67,677.66 232.00,677.65 232.33,677.64 232.67,677.63 233.00,677.63 233.33,677.64 233.67,677.67 234.00,677.70 234.33,677.72 234.67,677.74 235.00,677.74 235.33,677.71 235.67,677.66 236.00,677.60 236.33,677.54 236.67,677.49 237.00,677.46 237.33,677.46 237.67,677.48 238.00,677.52 238.33,677.54 238.67,677.56 239.00,677.55 239.34,677.49 239.67,677.39 240.00,677.28 240.34,677.18 240.67,677.10 241.00,677.09 241.33,677.14 241.67,677.27 242.00,677.42 242.33,677.58 242.67,677.70 243.00,677.75 243.33,677.73 243.67,677.63 244.00,677.51 244.33,677.39 244.67,677.29 245.00,677.26 245.33,677.31 245.67,677.41 246.00,677.55 246.33,677.70 246.66,677.81 247.00,677.88 247.33,677.89 247.66,677.86 248.00,677.81 248.33,677.75 248.67,677.69 249.00,677.63 249.33,677.58 249.67,677.53 250.00,677.47 250.33,677.42 250.67,677.37 251.00,677.32 251.33,677.29 251.67,677.25 252.00,677.22 252.33,677.19 252.67,677.17 253.00,677.17 253.33,677.17 253.67,677.17 254.00,677.19 254.33,677.21 254.67,677.24 255.00,677.28 255.33,677.32 255.67,677.39 256.00,677.45 256.33,677.52 256.67,677.58 257.00,677.62 257.33,677.66 257.67,677.68 258.00,677.70 258.34,677.71 258.67,677.71 259.00,677.68 259.33,677.62 259.67,677.53 260.00,677.42 260.33,677.31 260.67,677.22 261.00,677.15 261.33,677.11 261.66,677.09 262.00,677.07 262.33,677.08 262.67,677.09 263.00,677.11 263.33,677.16 263.67,677.23 264.00,677.31 264.33,677.40 264.67,677.47 265.00,677.52 265.33,677.55 265.67,677.57 266.00,677.58 266.33,677.59 266.67,677.58 267.00,677.57 267.33,677.56 267.67,677.53 268.00,677.50 268.33,677.46 268.67,677.43 269.00,677.40 269.33,677.37 269.67,677.33 270.00,677.29 270.33,677.26 270.67,677.25 271.00,677.25 271.33,677.29 271.67,677.36 272.00,677.44 272.34,677.52 272.67,677.58 273.00,677.59 273.34,677.57 273.68,677.53 274.02,677.46 274.35,677.36 274.68,677.23 275.00,677.06 275.40,676.78 275.80,676.43 276.18,676.02 276.55,675.56 276.89,675.05 277.20,674.50 277.54,673.58 277.78,672.51 277.97,671.33 278.16,670.11 278.40,668.90 278.75,667.75 279.22,666.57 279.76,665.36 280.35,664.16 281.01,663.01 281.72,661.95 282.50,661.00 283.27,660.22 284.12,659.47 285.01,658.80 285.93,658.22 286.85,657.78 287.75,657.50 288.49,657.41 289.22,657.45 289.96,657.58 290.70,657.78 291.46,658.03 292.25,658.30 293.31,658.74 294.43,659.31 295.57,659.95 296.72,660.62 297.87,661.24 299.00,661.75 300.03,662.13 301.08,662.48 302.13,662.78 303.15,663.06 304.12,663.29 305.00,663.50 305.54,663.62 306.01,663.72 306.45,663.81 306.90,663.88 307.41,663.94 308.00,664.00 309.32,664.07 310.86,664.09 312.58,664.07 314.38,664.04 316.21,664.01 318.00,664.00 319.92,664.00 321.87,664.00 323.85,664.00 325.86,664.00 327.91,664.00 330.00,664.00 332.40,664.00 334.88,664.00 337.40,664.00 339.94,664.00 342.48,664.00 345.00,664.00 347.50,664.00 350.00,664.00 352.50,664.00 355.00,664.00 357.50,664.00 360.00,664.00 362.50,664.00 365.00,664.00 367.50,664.00 370.00,664.00 372.50,664.00 375.00,664.00 377.54,664.00 380.11,664.00 382.69,664.00 385.22,664.00 387.68,664.00 390.00,664.00 391.79,664.00 393.51,664.00 395.18,664.00 396.80,664.00 398.40,664.00 400.00,664.00 401.53,664.05 403.11,664.17 404.67,664.29 406.14,664.34 407.44,664.26 408.50,664.00 408.99,663.72 409.38,663.36 409.71,662.95 410.01,662.52 410.35,662.11 410.75,661.75 411.30,661.34 411.91,660.89 412.55,660.47 413.21,660.11 413.87,659.87 414.50,659.80 415.16,660.02 415.84,660.51 416.52,661.13 417.17,661.72 417.76,662.13 418.25,662.20 418.64,661.88 418.95,661.28 419.19,660.51 419.39,659.64 419.57,658.77 419.75,658.00 419.90,657.39 420.01,656.81 420.10,656.24 420.19,655.64 420.29,654.97 420.40,654.20 420.67,652.46 420.99,650.44 421.34,648.18 421.68,645.71 422.01,643.07 422.30,640.30 422.68,635.58 423.02,630.27 423.32,624.55 423.58,618.62 423.80,612.68 424.00,606.90 424.08,600.69 424.02,593.90 423.93,587.10 423.90,580.83 424.06,575.64 424.50,572.10 424.70,571.47 424.94,571.04 425.19,570.71 425.44,570.38 425.69,569.94 425.90,569.30 426.49,565.02 426.84,558.50 427.02,550.55 427.11,541.98 427.18,533.59 427.30,526.20 427.44,520.62 427.55,515.19 427.65,509.90 427.74,504.73 427.82,499.67 427.90,494.70 427.69,490.11 427.15,485.29 426.61,480.55 426.38,476.21 426.81,472.59 428.20,470.00 430.74,468.50 434.35,467.61 438.51,467.31 442.66,467.61 446.27,468.50 448.80,470.00 450.16,472.65 450.52,476.41 450.23,480.89 449.64,485.69 449.12,490.43 449.00,494.70 449.23,498.19 449.51,501.58 449.85,504.92 450.22,508.24 450.61,511.59 451.00,515.00 451.41,518.62 451.82,522.23 452.25,525.87 452.71,529.58 453.23,533.37 453.80,537.30 454.53,542.15 455.29,547.22 456.11,552.43 457.04,557.67 458.09,562.86 459.30,567.90 460.67,572.77 462.20,577.68 463.85,582.53 465.59,587.24 467.35,591.69 469.10,595.80 470.42,598.69 471.74,601.39 473.07,603.95 474.45,606.40 475.88,608.77 477.40,611.10 478.96,613.31 480.66,615.53 482.40,617.68 484.13,619.69 485.75,621.49 487.20,623.00 487.98,623.72 488.75,624.32 489.49,624.85 490.17,625.34 490.78,625.85 491.30,626.40 491.63,626.82 491.90,627.22 492.12,627.62 492.32,628.05 492.51,628.57 492.70,629.20 493.11,631.38 493.40,634.31 493.62,637.70 493.81,641.24 494.01,644.61 494.25,647.50 494.44,649.22 494.61,650.75 494.78,652.20 494.98,653.65 495.21,655.22 495.50,657.00 496.08,660.68 496.77,665.31 497.56,670.20 498.42,674.69 499.32,678.10 500.25,679.75 500.48,679.82 500.69,679.78 500.91,679.67 501.15,679.53 501.43,679.39 501.75,679.30 502.73,679.22 503.97,679.19 505.41,679.21 506.94,679.25 508.50,679.28 510.00,679.30 511.61,679.30 513.26,679.30 514.94,679.30 516.63,679.30 518.32,679.30 520.00,679.30 521.67,679.30 523.33,679.30 525.00,679.30 526.67,679.30 528.33,679.30 530.00,679.30 531.70,679.30 533.43,679.30 535.16,679.30 536.85,679.30 538.48,679.30 540.00,679.30 541.14,679.27 542.27,679.20 543.36,679.13 544.37,679.10 545.27,679.14 546.00,679.30 546.33,679.48 546.59,679.72 546.81,679.99 547.02,680.23 547.24,680.42 547.50,680.50 547.85,680.45 548.23,680.29 548.62,680.04 549.02,679.73 549.40,679.37 549.75,679.00 550.16,678.38 550.51,677.60 550.84,676.74 551.17,675.89 551.55,675.11 552.00,674.50 552.43,674.11 552.91,673.76 553.41,673.47 553.93,673.24 554.46,673.08 555.00,673.00 555.60,673.02 556.24,673.14 556.89,673.34 557.53,673.61 558.16,673.90 558.75,674.20 559.26,674.54 559.72,674.95 560.16,675.39 560.62,675.82 561.14,676.20 561.75,676.50 562.93,676.75 564.37,676.82 565.95,676.79 567.50,676.72 568.90,676.68 570.00,676.75 570.42,676.83 570.77,676.93 571.09,677.04 571.38,677.15 571.68,677.25 572.00,677.32 572.33,677.37 572.66,677.39 573.00,677.40 573.33,677.41 573.67,677.43 574.00,677.46 574.33,677.53 574.67,677.62 575.00,677.72 575.33,677.81 575.67,677.88 576.00,677.91 576.33,677.90 576.67,677.85 577.00,677.79 577.33,677.71 577.67,677.66 578.00,677.63 578.33,677.64 578.67,677.69 579.00,677.74 579.33,677.80 579.67,677.84 580.00,677.85 580.33,677.82 580.67,677.76 581.00,677.69 581.33,677.61 581.67,677.54 582.00,677.48 582.33,677.43 582.67,677.39 583.00,677.35 583.33,677.31 583.67,677.28 584.00,677.26 584.33,677.24 584.67,677.23 585.00,677.21 585.34,677.22 585.67,677.23 586.00,677.27 586.34,677.35 586.67,677.47 587.00,677.61 587.33,677.74 587.66,677.85 588.00,677.91 588.33,677.93 588.66,677.91 589.00,677.86 589.33,677.80 589.67,677.74 590.00,677.68 590.33,677.63 590.67,677.57 591.00,677.51 591.33,677.44 591.67,677.38 592.00,677.33 592.33,677.27 592.67,677.21 593.00,677.15 593.33,677.10 593.67,677.07 594.00,677.07 594.33,677.10 594.67,677.17 595.00,677.26 595.33,677.35 595.67,677.43 596.00,677.50 596.33,677.54 596.67,677.59 597.00,677.62 597.33,677.64 597.67,677.66 598.00,677.66 598.33,677.64 598.67,677.61 599.00,677.56 599.33,677.51 599.67,677.47 600.00,677.43 600.33,677.39 600.67,677.35 601.00,677.32 601.33,677.29 601.67,677.28 602.00,677.28 602.33,677.31 602.67,677.37 603.00,677.44 603.33,677.52 603.67,677.59 604.00,677.65 604.33,677.71 604.67,677.77 605.00,677.83 605.34,677.87 605.67,677.89 606.00,677.88 606.34,677.82 606.67,677.72 607.00,677.59 607.33,677.46 607.66,677.34 608.00,677.25 608.33,677.19 608.66,677.15 609.00,677.11 609.33,677.09 609.67,677.08 610.00,677.08 610.33,677.10 610.67,677.15 611.00,677.20 611.33,677.26 611.67,677.32 612.00,677.35 612.33,677.38 612.67,677.39 613.00,677.39 613.33,677.40 613.67,677.41 614.00,677.43 614.33,677.47 614.67,677.52 615.00,677.58 615.33,677.63 615.67,677.66 616.00,677.66 616.33,677.62 616.67,677.53 617.00,677.43 617.33,677.33 617.67,677.25 618.00,677.23 618.33,677.27 618.67,677.36 619.00,677.47 619.33,677.60 619.66,677.70 620.00,677.77 620.33,677.79 620.66,677.80 621.00,677.79 621.33,677.77 621.67,677.74 622.00,677.72 622.33,677.69 622.67,677.66 623.00,677.62 623.33,677.58 623.67,677.54 624.00,677.50 624.33,677.45 624.67,677.38 625.00,677.32 625.34,677.26 625.67,677.23 626.00,677.23 626.34,677.31 626.67,677.44 627.00,677.60 627.33,677.75 627.67,677.87 628.00,677.92 628.33,677.89 628.67,677.78 629.00,677.64 629.33,677.50 629.67,677.38 630.00,677.33 630.33,677.36 630.67,677.44 631.00,677.56 631.33,677.67 631.67,677.76 632.00,677.79 632.33,677.75 632.67,677.67 633.00,677.55 633.33,677.43 633.66,677.33 634.00,677.26 634.33,677.22 634.67,677.20 635.00,677.19 635.33,677.20 635.67,677.22 636.00,677.25 636.33,677.31 636.67,677.41 637.00,677.52 637.33,677.62 637.67,677.70 638.00,677.73 638.33,677.71 638.67,677.62 639.00,677.52 639.33,677.41 639.67,677.34 640.00,677.32 640.33,677.37 640.67,677.47 641.00,677.61 641.33,677.75 641.67,677.85 642.00,677.91 642.33,677.89 642.66,677.84 643.00,677.76 643.33,677.66 643.67,677.57 644.00,677.50 644.33,677.44 644.67,677.38 645.00,677.33 645.33,677.28 645.67,677.25 646.00,677.22 646.33,677.20 646.67,677.20 647.00,677.21 647.33,677.22 647.67,677.23 648.00,677.25 648.33,677.27 648.67,677.30 649.00,677.33 649.33,677.36 649.67,677.39 650.00,677.43 650.33,677.46 650.67,677.50 651.00,677.53 651.33,677.57 651.67,677.61 652.00,677.65 652.33,677.70 652.67,677.77 653.00,677.83 653.34,677.89 653.67,677.92 654.00,677.90 654.34,677.83 654.67,677.70 655.00,677.54 655.33,677.39 655.66,677.26 656.00,677.18 656.33,677.17 656.66,677.20 657.00,677.26 657.33,677.32 657.67,677.38 658.00,677.40 658.33,677.39 658.67,677.35 659.00,677.30 659.34,677.25 659.67,677.23 660.00,677.24 660.34,677.32 660.67,677.46 661.00,677.62 661.34,677.77 661.67,677.89 662.00,677.93 662.33,677.88 662.66,677.76 663.00,677.60 663.33,677.43 663.66,677.28 664.00,677.18 664.33,677.13 664.66,677.10 665.00,677.09 665.33,677.09 665.67,677.10 666.00,677.10 666.33,677.09 666.67,677.08 667.00,677.08 667.33,677.08 667.67,677.09 668.00,677.10 668.33,677.14 668.67,677.18 669.00,677.23 669.33,677.28 669.67,677.34 670.00,677.40 670.33,677.48 670.67,677.56 671.00,677.65 671.33,677.74 671.67,677.81 672.00,677.86 672.33,677.88 672.66,677.89 673.00,677.89 673.33,677.88 673.67,677.86 674.00,677.85 674.33,677.83 674.67,677.80 675.00,677.76 675.33,677.73 675.67,677.71 676.00,677.71 676.33,677.73 676.67,677.77 677.00,677.82 677.33,677.88 677.67,677.92 678.00,677.95 678.33,677.96 678.67,677.97 679.00,677.97 679.34,677.95 679.67,677.93 680.00,677.89 680.34,677.82 680.67,677.73 681.00,677.62 681.33,677.51 681.67,677.42 682.00,677.35 682.33,677.29 682.67,677.24 683.00,677.21 683.34,677.19 683.67,677.19 684.00,677.22 684.34,677.29 684.67,677.41 685.00,677.56 685.33,677.70 685.66,677.82 686.00,677.89 686.33,677.92 686.66,677.91 687.00,677.89 687.33,677.84 687.67,677.79 688.00,677.72 688.34,677.63 688.67,677.50 689.00,677.35 689.33,677.22 689.67,677.12 690.00,677.08 690.33,677.11 690.66,677.21 691.00,677.34 691.33,677.48 691.66,677.59 692.00,677.65 692.33,677.65 692.66,677.61 693.00,677.55 693.33,677.49 693.67,677.43 694.00,677.39 694.33,677.38 694.67,677.37 695.00,677.38 695.33,677.38 695.67,677.39 696.00,677.39 696.33,677.38 696.67,677.38 697.00,677.38 697.33,677.37 697.67,677.36 698.00,677.35 698.33,677.33 698.67,677.31 699.00,677.28 699.33,677.26 699.67,677.23 700.00,677.20 700.33,677.17 700.67,677.14 701.00,677.10 701.33,677.07 701.67,677.05 702.00,677.05 702.33,677.07 702.67,677.11 703.00,677.16 703.33,677.22 703.67,677.27 704.00,677.30 704.33,677.32 704.67,677.32 705.00,677.32 705.34,677.32 705.67,677.33 706.00,677.37 706.34,677.44 706.67,677.56 707.00,677.69 707.34,677.81 707.67,677.89 708.00,677.91 708.34,677.84 708.67,677.70 709.00,677.52 709.33,677.35 709.67,677.21 710.00,677.16 710.33,677.22 710.67,677.36 711.00,677.54 711.33,677.72 711.67,677.86 712.00,677.92 712.33,677.88 712.66,677.77 713.00,677.61 713.33,677.46 713.66,677.32 714.00,677.24 714.33,677.21 714.66,677.21 715.00,677.24 715.33,677.28 715.67,677.32 716.00,677.37 716.33,677.43 716.67,677.50 717.00,677.59 717.33,677.67 717.67,677.74 718.00,677.79 718.33,677.82 718.67,677.83 719.00,677.84 719.33,677.83 719.67,677.81 720.00,677.79 720.33,677.75 720.67,677.70 721.00,677.64 721.33,677.57 721.67,677.50 722.00,677.44 722.33,677.37 722.67,677.30 723.00,677.22 723.33,677.16 723.67,677.11 724.00,677.09 724.33,677.12 724.67,677.19 725.00,677.27 725.33,677.36 725.67,677.43 726.00,677.48 726.33,677.48 726.67,677.46 727.00,677.42 727.33,677.39 727.67,677.37 728.00,677.39 728.34,677.45 728.67,677.55 729.00,677.67 729.34,677.78 729.67,677.85 730.00,677.88 730.33,677.83 730.67,677.71 731.00,677.57 731.33,677.42 731.66,677.30 732.00,677.22 732.33,677.20 732.66,677.21 733.00,677.23 733.33,677.27 733.67,677.32 734.00,677.38 734.34,677.45 734.67,677.56 735.00,677.67 735.34,677.78 735.67,677.84 736.00,677.86 736.34,677.79 736.67,677.65 737.00,677.48 737.33,677.30 737.66,677.16 738.00,677.08 738.33,677.07 738.66,677.11 739.00,677.18 739.33,677.26 739.67,677.35 740.00,677.42 740.33,677.48 740.67,677.55 741.00,677.62 741.33,677.69 741.67,677.74 742.00,677.78 742.33,677.80 742.67,677.82 743.00,677.82 743.34,677.81 743.67,677.79 744.00,677.74 744.34,677.66 744.67,677.54 745.00,677.41 745.33,677.28 745.66,677.16 746.00,677.09 746.33,677.05 746.66,677.04 747.00,677.04 747.33,677.06 747.67,677.07 748.00,677.08 748.33,677.08 748.67,677.06 749.00,677.05 749.34,677.04 749.67,677.06 750.00,677.11 750.34,677.21 750.67,677.36 751.00,677.53 751.33,677.70 751.67,677.82 752.00,677.88 752.33,677.84 752.66,677.74 753.00,677.60 753.33,677.45 753.67,677.34 754.00,677.28 754.33,677.30 754.66,677.36 755.00,677.46 755.33,677.56 755.67,677.65 756.00,677.72 756.33,677.77 756.67,677.81 757.00,677.85 757.33,677.87 757.67,677.88 758.00,677.86 758.33,677.81 758.67,677.72 759.00,677.62 759.33,677.51 759.67,677.42 760.00,677.36 760.33,677.31 760.67,677.28 761.00,677.26 761.34,677.25 761.67,677.26 762.00,677.30 762.34,677.37 762.67,677.48 763.00,677.62 763.33,677.75 763.67,677.86 764.00,677.91 764.33,677.91 764.66,677.88 765.00,677.82 765.33,677.74 765.67,677.67 766.00,677.61 766.33,677.54 766.67,677.47 767.00,677.40 767.33,677.34 767.67,677.30 768.00,677.29 768.33,677.32 768.67,677.40 769.00,677.49 769.33,677.59 769.67,677.66 770.00,677.69 770.33,677.68 770.67,677.62 771.00,677.54 771.33,677.46 771.67,677.38 772.00,677.33 772.33,677.31 772.67,677.31 773.00,677.31 773.33,677.31 773.67,677.31 774.00,677.30 774.33,677.26 774.67,677.20 775.00,677.13 775.34,677.08 775.67,677.04 776.00,677.05 776.34,677.12 776.67,677.23 777.00,677.37 777.33,677.51 777.66,677.64 778.00,677.73 778.33,677.79 778.66,677.83 779.00,677.86 779.33,677.87 779.67,677.88 780.00,677.87 780.33,677.85 780.67,677.80 781.00,677.74 781.33,677.68 781.67,677.64 782.00,677.62 782.33,677.65 782.67,677.71 783.00,677.79 783.34,677.86 783.67,677.91 784.00,677.90 784.34,677.81 784.67,677.67 785.00,677.49 785.33,677.31 785.66,677.16 786.00,677.07 786.33,677.05 786.66,677.06 787.00,677.10 787.33,677.16 787.67,677.22 788.00,677.26 788.33,677.29 788.67,677.32 789.00,677.35 789.33,677.39 789.67,677.43 790.00,677.48 790.33,677.54 790.67,677.62 791.00,677.71 791.33,677.79 791.67,677.86 792.00,677.91 792.33,677.94 792.67,677.96 793.00,677.97 793.33,677.96 793.67,677.94 794.00,677.91 794.33,677.85 794.67,677.76 795.00,677.66 795.33,677.56 795.67,677.47 796.00,677.40 796.33,677.35 796.66,677.32 797.00,677.30 797.33,677.28 797.67,677.28 798.00,677.28 798.33,677.29 798.67,677.31 799.00,677.35 799.33,677.38 799.67,677.41 800.00,677.44 800.33,677.45 800.67,677.45 801.00,677.45 801.33,677.45 801.67,677.47 802.00,677.49 802.33,677.55 802.67,677.64 803.00,677.73 803.34,677.82 803.67,677.88 804.00,677.89 804.34,677.82 804.67,677.70 805.00,677.54 805.33,677.39 805.67,677.27 806.00,677.21 806.33,677.24 806.66,677.33 807.00,677.46 807.33,677.59 807.66,677.70 808.00,677.77 808.33,677.80 808.66,677.79 809.00,677.77 809.33,677.75 809.67,677.72 810.00,677.71 810.33,677.72 810.67,677.73 811.00,677.75 811.33,677.77 811.67,677.78 812.00,677.79 812.33,677.79 812.67,677.79 813.00,677.78 813.33,677.77 813.67,677.76 814.00,677.75 814.33,677.73 814.67,677.71 815.00,677.68 815.33,677.66 815.67,677.63 816.00,677.60 816.33,677.56 816.67,677.51 817.00,677.46 817.33,677.41 817.67,677.37 818.00,677.35 818.33,677.33 818.67,677.32 819.00,677.32 819.33,677.33 819.67,677.33 820.00,677.34 820.33,677.34 820.67,677.33 821.00,677.33 821.33,677.34 821.67,677.35 822.00,677.38 822.33,677.43 822.67,677.51 823.00,677.61 823.34,677.69 823.67,677.74 824.00,677.75 824.33,677.70 824.67,677.59 825.00,677.45 825.33,677.31 825.66,677.20 826.00,677.12 826.33,677.09 826.66,677.09 827.00,677.11 827.33,677.14 827.67,677.18 828.00,677.23 828.33,677.30 828.67,677.40 829.00,677.51 829.33,677.62 829.67,677.70 830.00,677.73 830.33,677.70 830.67,677.64 831.00,677.54 831.33,677.44 831.67,677.34 832.00,677.27 832.33,677.23 832.66,677.19 833.00,677.16 833.33,677.14 833.67,677.12 834.00,677.11 834.33,677.09 834.67,677.07 835.00,677.06 835.34,677.05 835.67,677.06 836.00,677.08 836.33,677.14 836.67,677.22 837.00,677.33 837.33,677.42 837.67,677.50 838.00,677.55 838.33,677.54 838.67,677.50 839.00,677.44 839.34,677.38 839.67,677.34 840.00,677.34 840.33,677.40 840.67,677.51 841.00,677.63 841.33,677.76 841.66,677.86 842.00,677.93 842.33,677.95 842.66,677.95 843.00,677.92 843.33,677.89 843.67,677.86 844.00,677.85 844.33,677.86 844.67,677.89 845.00,677.93 845.34,677.95 845.67,677.96 846.00,677.94 846.38,677.86 846.82,677.73 847.25,677.58 847.63,677.44 847.90,677.33 848.00,677.29" fill="none" stroke="#000" stroke-width="1.6" stroke-linejoin="round" stroke-linecap="round"/>
<line x1="277.4" y1="80" x2="277.4" y2="268" stroke="#000" stroke-width="1.4" stroke-dasharray="3 1.5"/>
<line x1="525.5" y1="80" x2="525.5" y2="268" stroke="#444" stroke-width="1" stroke-dasharray="1 1"/>
<line x1="277.4" y1="288" x2="277.4" y2="476" stroke="#000" stroke-width="1.4" stroke-dasharray="3 1.5"/>
<line x1="525.5" y1="288" x2="525.5" y2="476" stroke="#444" stroke-width="1" stroke-dasharray="1 1"/>
<line x1="277.4" y1="495" x2="277.4" y2="684" stroke="#000" stroke-width="1.4" stroke-dasharray="3 1.5"/>
<line x1="525.5" y1="495" x2="525.5" y2="684" stroke="#444" stroke-width="1" stroke-dasharray="1 1"/>
<rect x="279.5" y="82.5" width="61" height="11.6" fill="#fff" stroke="#111" stroke-width="1"/>
<text x="281.10" y="92.00" text-anchor="start" font-family='"Liberation Sans", sans-serif' font-weight="normal" font-size="9.6" fill="#000" textLength="42.00" lengthAdjust="spacingAndGlyphs">K1: 9070.2</text>
<rect x="526.5" y="82.5" width="61" height="11" fill="#fff" stroke="#111" stroke-width="1"/>
<text x="527.70" y="91.60" text-anchor="start" font-family='"Liberation Sans", sans-serif' font-weight="normal" font-size="9.6" fill="#000" textLength="42.70" lengthAdjust="spacingAndGlyphs">K2: 9119.9</text>
<line x1="50.5" y1="82" x2="50.5" y2="264.8" stroke="#333" stroke-width="1"/>
<line x1="47" y1="260.50" x2="50.5" y2="260.50" stroke="#333" stroke-width="1"/>
<line x1="47" y1="253.50" x2="50.5" y2="253.50" stroke="#333" stroke-width="1"/>
<line x1="47" y1="246.50" x2="50.5" y2="246.50" stroke="#333" stroke-width="1"/>
<line x1="47" y1="239.50" x2="50.5" y2="239.50" stroke="#333" stroke-width="1"/>
<line x1="44" y1="233.50" x2="50.5" y2="233.50" stroke="#333" stroke-width="1"/>
<text x="40.6" y="236.60" text-anchor="end" font-family='"Liberation Sans", sans-serif' font-size="9.9" fill="#000" stroke="#000" stroke-width="0.15">1</text>
<line x1="47" y1="226.50" x2="50.5" y2="226.50" stroke="#333" stroke-width="1"/>
<line x1="47" y1="219.50" x2="50.5" y2="219.50" stroke="#333" stroke-width="1"/>
<line x1="47" y1="212.50" x2="50.5" y2="212.50" stroke="#333" stroke-width="1"/>
<line x1="47" y1="205.50" x2="50.5" y2="205.50" stroke="#333" stroke-width="1"/>
<line x1="44" y1="199.50" x2="50.5" y2="199.50" stroke="#333" stroke-width="1"/>
<text x="40.6" y="202.65" text-anchor="end" font-family='"Liberation Sans", sans-serif' font-size="9.9" fill="#000" stroke="#000" stroke-width="0.15">2</text>
<line x1="47" y1="192.50" x2="50.5" y2="192.50" stroke="#333" stroke-width="1"/>
<line x1="47" y1="185.50" x2="50.5" y2="185.50" stroke="#333" stroke-width="1"/>
<line x1="47" y1="178.50" x2="50.5" y2="178.50" stroke="#333" stroke-width="1"/>
<line x1="47" y1="171.50" x2="50.5" y2="171.50" stroke="#333" stroke-width="1"/>
<line x1="44" y1="165.50" x2="50.5" y2="165.50" stroke="#333" stroke-width="1"/>
<text x="40.6" y="168.70" text-anchor="end" font-family='"Liberation Sans", sans-serif' font-size="9.9" fill="#000" stroke="#000" stroke-width="0.15">3</text>
<line x1="47" y1="158.50" x2="50.5" y2="158.50" stroke="#333" stroke-width="1"/>
<line x1="47" y1="151.50" x2="50.5" y2="151.50" stroke="#333" stroke-width="1"/>
<line x1="47" y1="144.50" x2="50.5" y2="144.50" stroke="#333" stroke-width="1"/>
<line x1="47" y1="138.50" x2="50.5" y2="138.50" stroke="#333" stroke-width="1"/>
<line x1="44" y1="131.50" x2="50.5" y2="131.50" stroke="#333" stroke-width="1"/>
<text x="40.6" y="134.75" text-anchor="end" font-family='"Liberation Sans", sans-serif' font-size="9.9" fill="#000" stroke="#000" stroke-width="0.15">4</text>
<line x1="47" y1="124.50" x2="50.5" y2="124.50" stroke="#333" stroke-width="1"/>
<line x1="47" y1="117.50" x2="50.5" y2="117.50" stroke="#333" stroke-width="1"/>
<line x1="47" y1="110.50" x2="50.5" y2="110.50" stroke="#333" stroke-width="1"/>
<line x1="47" y1="104.50" x2="50.5" y2="104.50" stroke="#333" stroke-width="1"/>
<line x1="44" y1="97.50" x2="50.5" y2="97.50" stroke="#333" stroke-width="1"/>
<text x="40.6" y="100.80" text-anchor="end" font-family='"Liberation Sans", sans-serif' font-size="9.9" fill="#000" stroke="#000" stroke-width="0.15">5</text>
<line x1="47" y1="90.50" x2="50.5" y2="90.50" stroke="#333" stroke-width="1"/>
<line x1="47" y1="83.50" x2="50.5" y2="83.50" stroke="#333" stroke-width="1"/>
<line x1="50.5" y1="290" x2="50.5" y2="472.6" stroke="#333" stroke-width="1"/>
<line x1="47" y1="468.50" x2="50.5" y2="468.50" stroke="#333" stroke-width="1"/>
<line x1="47" y1="462.50" x2="50.5" y2="462.50" stroke="#333" stroke-width="1"/>
<line x1="47" y1="456.50" x2="50.5" y2="456.50" stroke="#333" stroke-width="1"/>
<line x1="47" y1="451.50" x2="50.5" y2="451.50" stroke="#333" stroke-width="1"/>
<line x1="44" y1="445.50" x2="50.5" y2="445.50" stroke="#333" stroke-width="1"/>
<text x="40.6" y="449.00" text-anchor="end" font-family='"Liberation Sans", sans-serif' font-size="9.9" fill="#000" stroke="#000" stroke-width="0.15">1</text>
<line x1="47" y1="439.50" x2="50.5" y2="439.50" stroke="#333" stroke-width="1"/>
<line x1="47" y1="434.50" x2="50.5" y2="434.50" stroke="#333" stroke-width="1"/>
<line x1="47" y1="428.50" x2="50.5" y2="428.50" stroke="#333" stroke-width="1"/>
<line x1="47" y1="422.50" x2="50.5" y2="422.50" stroke="#333" stroke-width="1"/>
<line x1="44" y1="417.50" x2="50.5" y2="417.50" stroke="#333" stroke-width="1"/>
<text x="40.6" y="420.60" text-anchor="end" font-family='"Liberation Sans", sans-serif' font-size="9.9" fill="#000" stroke="#000" stroke-width="0.15">2</text>
<line x1="47" y1="411.50" x2="50.5" y2="411.50" stroke="#333" stroke-width="1"/>
<line x1="47" y1="405.50" x2="50.5" y2="405.50" stroke="#333" stroke-width="1"/>
<line x1="47" y1="400.50" x2="50.5" y2="400.50" stroke="#333" stroke-width="1"/>
<line x1="47" y1="394.50" x2="50.5" y2="394.50" stroke="#333" stroke-width="1"/>
<line x1="44" y1="388.50" x2="50.5" y2="388.50" stroke="#333" stroke-width="1"/>
<text x="40.6" y="392.20" text-anchor="end" font-family='"Liberation Sans", sans-serif' font-size="9.9" fill="#000" stroke="#000" stroke-width="0.15">3</text>
<line x1="47" y1="383.50" x2="50.5" y2="383.50" stroke="#333" stroke-width="1"/>
<line x1="47" y1="377.50" x2="50.5" y2="377.50" stroke="#333" stroke-width="1"/>
<line x1="47" y1="371.50" x2="50.5" y2="371.50" stroke="#333" stroke-width="1"/>
<line x1="47" y1="365.50" x2="50.5" y2="365.50" stroke="#333" stroke-width="1"/>
<line x1="44" y1="360.50" x2="50.5" y2="360.50" stroke="#333" stroke-width="1"/>
<text x="40.6" y="363.80" text-anchor="end" font-family='"Liberation Sans", sans-serif' font-size="9.9" fill="#000" stroke="#000" stroke-width="0.15">4</text>
<line x1="47" y1="354.50" x2="50.5" y2="354.50" stroke="#333" stroke-width="1"/>
<line x1="47" y1="348.50" x2="50.5" y2="348.50" stroke="#333" stroke-width="1"/>
<line x1="47" y1="343.50" x2="50.5" y2="343.50" stroke="#333" stroke-width="1"/>
<line x1="47" y1="337.50" x2="50.5" y2="337.50" stroke="#333" stroke-width="1"/>
<line x1="44" y1="331.50" x2="50.5" y2="331.50" stroke="#333" stroke-width="1"/>
<text x="40.6" y="335.40" text-anchor="end" font-family='"Liberation Sans", sans-serif' font-size="9.9" fill="#000" stroke="#000" stroke-width="0.15">5</text>
<line x1="47" y1="326.50" x2="50.5" y2="326.50" stroke="#333" stroke-width="1"/>
<line x1="47" y1="320.50" x2="50.5" y2="320.50" stroke="#333" stroke-width="1"/>
<line x1="47" y1="314.50" x2="50.5" y2="314.50" stroke="#333" stroke-width="1"/>
<line x1="47" y1="309.50" x2="50.5" y2="309.50" stroke="#333" stroke-width="1"/>
<line x1="44" y1="303.50" x2="50.5" y2="303.50" stroke="#333" stroke-width="1"/>
<text x="40.6" y="307.00" text-anchor="end" font-family='"Liberation Sans", sans-serif' font-size="9.9" fill="#000" stroke="#000" stroke-width="0.15">6</text>
<line x1="47" y1="297.50" x2="50.5" y2="297.50" stroke="#333" stroke-width="1"/>
<line x1="47" y1="292.50" x2="50.5" y2="292.50" stroke="#333" stroke-width="1"/>
<line x1="50.5" y1="497" x2="50.5" y2="680.4" stroke="#333" stroke-width="1"/>
<line x1="47" y1="674.50" x2="50.5" y2="674.50" stroke="#333" stroke-width="1"/>
<line x1="47" y1="666.50" x2="50.5" y2="666.50" stroke="#333" stroke-width="1"/>
<line x1="47" y1="659.50" x2="50.5" y2="659.50" stroke="#333" stroke-width="1"/>
<line x1="47" y1="652.50" x2="50.5" y2="652.50" stroke="#333" stroke-width="1"/>
<line x1="44" y1="644.50" x2="50.5" y2="644.50" stroke="#333" stroke-width="1"/>
<text x="40.6" y="648.38" text-anchor="end" font-family='"Liberation Sans", sans-serif' font-size="9.9" fill="#000" stroke="#000" stroke-width="0.15">5</text>
<line x1="47" y1="637.50" x2="50.5" y2="637.50" stroke="#333" stroke-width="1"/>
<line x1="47" y1="630.50" x2="50.5" y2="630.50" stroke="#333" stroke-width="1"/>
<line x1="47" y1="622.50" x2="50.5" y2="622.50" stroke="#333" stroke-width="1"/>
<line x1="47" y1="615.50" x2="50.5" y2="615.50" stroke="#333" stroke-width="1"/>
<line x1="44" y1="608.50" x2="50.5" y2="608.50" stroke="#333" stroke-width="1"/>
<text x="40.6" y="611.55" text-anchor="end" font-family='"Liberation Sans", sans-serif' font-size="9.9" fill="#000" stroke="#000" stroke-width="0.15">10</text>
<line x1="47" y1="600.50" x2="50.5" y2="600.50" stroke="#333" stroke-width="1"/>
<line x1="47" y1="593.50" x2="50.5" y2="593.50" stroke="#333" stroke-width="1"/>
<line x1="47" y1="585.50" x2="50.5" y2="585.50" stroke="#333" stroke-width="1"/>
<line x1="47" y1="578.50" x2="50.5" y2="578.50" stroke="#333" stroke-width="1"/>
<line x1="44" y1="571.50" x2="50.5" y2="571.50" stroke="#333" stroke-width="1"/>
<text x="40.6" y="574.73" text-anchor="end" font-family='"Liberation Sans", sans-serif' font-size="9.9" fill="#000" stroke="#000" stroke-width="0.15">15</text>
<line x1="47" y1="563.50" x2="50.5" y2="563.50" stroke="#333" stroke-width="1"/>
<line x1="47" y1="556.50" x2="50.5" y2="556.50" stroke="#333" stroke-width="1"/>
<line x1="47" y1="549.50" x2="50.5" y2="549.50" stroke="#333" stroke-width="1"/>
<line x1="47" y1="541.50" x2="50.5" y2="541.50" stroke="#333" stroke-width="1"/>
<line x1="44" y1="534.50" x2="50.5" y2="534.50" stroke="#333" stroke-width="1"/>
<text x="40.6" y="537.90" text-anchor="end" font-family='"Liberation Sans", sans-serif' font-size="9.9" fill="#000" stroke="#000" stroke-width="0.15">20</text>
<line x1="47" y1="527.50" x2="50.5" y2="527.50" stroke="#333" stroke-width="1"/>
<line x1="47" y1="519.50" x2="50.5" y2="519.50" stroke="#333" stroke-width="1"/>
<line x1="47" y1="512.50" x2="50.5" y2="512.50" stroke="#333" stroke-width="1"/>
<line x1="47" y1="504.50" x2="50.5" y2="504.50" stroke="#333" stroke-width="1"/>
<line x1="44" y1="497.50" x2="50.5" y2="497.50" stroke="#333" stroke-width="1"/>
<text x="40.6" y="501.08" text-anchor="end" font-family='"Liberation Sans", sans-serif' font-size="9.9" fill="#000" stroke="#000" stroke-width="0.15">25</text>
<path d="M11,170.00 V171.80 L9.6,172.10 A2.9,2.9 0 1 0 9.6,175.90 L11,176.20 V178.00" fill="none" stroke="#000" stroke-width="1.5"/>
<path d="M11,377.70 V379.50 L9.6,379.80 A2.9,2.9 0 1 0 9.6,383.60 L11,383.90 V385.70" fill="none" stroke="#000" stroke-width="1.5"/>
<path d="M11,585.70 V587.50 L9.6,587.80 A2.9,2.9 0 1 0 9.6,591.60 L11,591.90 V593.70" fill="none" stroke="#000" stroke-width="1.5"/>
<line x1="52.5" y1="690.5" x2="845" y2="690.5" stroke="#333" stroke-width="1"/>
<line x1="73.75" y1="690.5" x2="73.75" y2="695.0" stroke="#333" stroke-width="1"/>
<line x1="98.78" y1="690.5" x2="98.78" y2="693.5" stroke="#333" stroke-width="1"/>
<line x1="123.80" y1="690.5" x2="123.80" y2="696.5" stroke="#333" stroke-width="1"/>
<text x="123.80" y="708.00" text-anchor="middle" font-family='"Liberation Sans", sans-serif' font-weight="normal" font-size="9.7" fill="#000" textLength="25.00" lengthAdjust="spacingAndGlyphs" stroke="#000" stroke-width="0.15">9 040</text>
<line x1="148.83" y1="690.5" x2="148.83" y2="693.5" stroke="#333" stroke-width="1"/>
<line x1="173.85" y1="690.5" x2="173.85" y2="695.0" stroke="#333" stroke-width="1"/>
<line x1="198.88" y1="690.5" x2="198.88" y2="693.5" stroke="#333" stroke-width="1"/>
<line x1="223.90" y1="690.5" x2="223.90" y2="696.5" stroke="#333" stroke-width="1"/>
<text x="223.90" y="708.00" text-anchor="middle" font-family='"Liberation Sans", sans-serif' font-weight="normal" font-size="9.7" fill="#000" textLength="25.00" lengthAdjust="spacingAndGlyphs" stroke="#000" stroke-width="0.15">9 060</text>
<line x1="248.93" y1="690.5" x2="248.93" y2="693.5" stroke="#333" stroke-width="1"/>
<line x1="273.95" y1="690.5" x2="273.95" y2="695.0" stroke="#333" stroke-width="1"/>
<line x1="298.98" y1="690.5" x2="298.98" y2="693.5" stroke="#333" stroke-width="1"/>
<line x1="324.00" y1="690.5" x2="324.00" y2="696.5" stroke="#333" stroke-width="1"/>
<text x="324.00" y="708.00" text-anchor="middle" font-family='"Liberation Sans", sans-serif' font-weight="normal" font-size="9.7" fill="#000" textLength="25.00" lengthAdjust="spacingAndGlyphs" stroke="#000" stroke-width="0.15">9 080</text>
<line x1="349.03" y1="690.5" x2="349.03" y2="693.5" stroke="#333" stroke-width="1"/>
<line x1="374.05" y1="690.5" x2="374.05" y2="695.0" stroke="#333" stroke-width="1"/>
<line x1="399.08" y1="690.5" x2="399.08" y2="693.5" stroke="#333" stroke-width="1"/>
<line x1="424.10" y1="690.5" x2="424.10" y2="696.5" stroke="#333" stroke-width="1"/>
<text x="424.10" y="708.00" text-anchor="middle" font-family='"Liberation Sans", sans-serif' font-weight="normal" font-size="9.7" fill="#000" textLength="25.00" lengthAdjust="spacingAndGlyphs" stroke="#000" stroke-width="0.15">9 100</text>
<line x1="449.12" y1="690.5" x2="449.12" y2="693.5" stroke="#333" stroke-width="1"/>
<line x1="474.15" y1="690.5" x2="474.15" y2="695.0" stroke="#333" stroke-width="1"/>
<line x1="499.18" y1="690.5" x2="499.18" y2="693.5" stroke="#333" stroke-width="1"/>
<line x1="524.20" y1="690.5" x2="524.20" y2="696.5" stroke="#333" stroke-width="1"/>
<text x="524.20" y="708.00" text-anchor="middle" font-family='"Liberation Sans", sans-serif' font-weight="normal" font-size="9.7" fill="#000" textLength="25.00" lengthAdjust="spacingAndGlyphs" stroke="#000" stroke-width="0.15">9 120</text>
<line x1="549.23" y1="690.5" x2="549.23" y2="693.5" stroke="#333" stroke-width="1"/>
<line x1="574.25" y1="690.5" x2="574.25" y2="695.0" stroke="#333" stroke-width="1"/>
<line x1="599.27" y1="690.5" x2="599.27" y2="693.5" stroke="#333" stroke-width="1"/>
<line x1="624.30" y1="690.5" x2="624.30" y2="696.5" stroke="#333" stroke-width="1"/>
<text x="624.30" y="708.00" text-anchor="middle" font-family='"Liberation Sans", sans-serif' font-weight="normal" font-size="9.7" fill="#000" textLength="25.00" lengthAdjust="spacingAndGlyphs" stroke="#000" stroke-width="0.15">9 140</text>
<line x1="649.33" y1="690.5" x2="649.33" y2="693.5" stroke="#333" stroke-width="1"/>
<line x1="674.35" y1="690.5" x2="674.35" y2="695.0" stroke="#333" stroke-width="1"/>
<line x1="699.38" y1="690.5" x2="699.38" y2="693.5" stroke="#333" stroke-width="1"/>
<line x1="724.40" y1="690.5" x2="724.40" y2="696.5" stroke="#333" stroke-width="1"/>
<text x="724.40" y="708.00" text-anchor="middle" font-family='"Liberation Sans", sans-serif' font-weight="normal" font-size="9.7" fill="#000" textLength="25.00" lengthAdjust="spacingAndGlyphs" stroke="#000" stroke-width="0.15">9 160</text>
<line x1="749.42" y1="690.5" x2="749.42" y2="693.5" stroke="#333" stroke-width="1"/>
<line x1="774.45" y1="690.5" x2="774.45" y2="695.0" stroke="#333" stroke-width="1"/>
<line x1="799.48" y1="690.5" x2="799.48" y2="693.5" stroke="#333" stroke-width="1"/>
<line x1="824.50" y1="690.5" x2="824.50" y2="696.5" stroke="#333" stroke-width="1"/>
<text x="824.50" y="708.00" text-anchor="middle" font-family='"Liberation Sans", sans-serif' font-weight="normal" font-size="9.7" fill="#000" textLength="25.00" lengthAdjust="spacingAndGlyphs" stroke="#000" stroke-width="0.15">9 180</text>
<text x="448.65" y="718.00" text-anchor="middle" font-family='"Liberation Sans", sans-serif' font-weight="bold" font-size="10.4" fill="#000" textLength="14.30" lengthAdjust="spacingAndGlyphs">мс</text>
<rect x="851" y="62" width="349" height="657" fill="#f0f0f0"/>
<rect x="850" y="62" width="350" height="30" fill="#202020"/>
<rect x="850" y="92" width="1" height="627" fill="#c4c4c4"/>
<text x="967.30" y="81.20" text-anchor="start" font-family='"Liberation Sans", sans-serif' font-weight="normal" font-size="8.6" fill="#f4f4f4" textLength="84.80" lengthAdjust="spacingAndGlyphs">Показания курсоров</text>
<polyline points="1183.5,74.5 1187.5,77.7 1183.5,81" fill="none" stroke="#fff" stroke-width="1.7"/>
<rect x="851" y="92" width="90" height="13" fill="#fff"/>
<rect x="1169" y="92" width="31" height="13" fill="#fff"/>
<rect x="941" y="92" width="228" height="13" fill="#efefef"/>
<text x="957.70" y="102.80" text-anchor="start" font-family='"Liberation Sans", sans-serif' font-weight="normal" font-size="10" fill="#111" textLength="42.30" lengthAdjust="spacingAndGlyphs" stroke="#111" stroke-width="0.15">Курсор K1</text>
<text x="1033.80" y="102.80" text-anchor="start" font-family='"Liberation Sans", sans-serif' font-weight="normal" font-size="10" fill="#111" textLength="42.85" lengthAdjust="spacingAndGlyphs" stroke="#111" stroke-width="0.15">Курсор K2</text>
<text x="1111.90" y="102.80" text-anchor="start" font-family='"Liberation Sans", sans-serif' font-weight="normal" font-size="10" fill="#111" textLength="37.25" lengthAdjust="spacingAndGlyphs" stroke="#111" stroke-width="0.15">Разность</text>
<text x="850.00" y="120.70" text-anchor="start" font-family='"Liberation Sans", sans-serif' font-weight="normal" font-size="10.2" fill="#111" textLength="43.20" lengthAdjust="spacingAndGlyphs" stroke="#111" stroke-width="0.15">Время, мс</text>
<text x="0" y="0" transform="translate(979.00,120.70) scale(0.88,1)" text-anchor="middle" font-family='"Liberation Sans", sans-serif' font-weight="bold" font-size="11" fill="#000">9070.2</text>
<text x="0" y="0" transform="translate(1054.80,120.70) scale(0.88,1)" text-anchor="middle" font-family='"Liberation Sans", sans-serif' font-weight="bold" font-size="11" fill="#000">9119.9</text>
<text x="0" y="0" transform="translate(1130.50,120.70) scale(0.88,1)" text-anchor="middle" font-family='"Liberation Sans", sans-serif' font-weight="bold" font-size="11" fill="#000">49.7</text>
<rect x="941" y="127.03" width="228" height="1" fill="#d0d0d0"/>
<text x="850.00" y="143.50" text-anchor="start" font-family='"Liberation Sans", sans-serif' font-weight="normal" font-size="10.2" fill="#111" textLength="38.40" lengthAdjust="spacingAndGlyphs" stroke="#111" stroke-width="0.15">Датчик, г</text>
<text x="0" y="0" transform="translate(979.00,143.50) scale(0.88,1)" text-anchor="middle" font-family='"Liberation Sans", sans-serif' font-weight="bold" font-size="11" fill="#000">59.69</text>
<text x="0" y="0" transform="translate(1054.80,143.50) scale(0.88,1)" text-anchor="middle" font-family='"Liberation Sans", sans-serif' font-weight="bold" font-size="11" fill="#000">60.07</text>
<text x="0" y="0" transform="translate(1130.50,143.50) scale(0.88,1)" text-anchor="middle" font-family='"Liberation Sans", sans-serif' font-weight="bold" font-size="11" fill="#000">0.38</text>
<rect x="941" y="149.86" width="228" height="1" fill="#d0d0d0"/>
<text x="0" y="0" transform="translate(1054.80,166.30) scale(0.88,1)" text-anchor="middle" font-family='"Liberation Sans", sans-serif' font-weight="bold" font-size="11" fill="#000">Фаза A</text>
<rect x="941" y="172.69" width="228" height="1" fill="#d0d0d0"/>
<text x="850.00" y="189.10" text-anchor="start" font-family='"Liberation Sans", sans-serif' font-weight="normal" font-size="10.2" fill="#111" textLength="77.90" lengthAdjust="spacingAndGlyphs" stroke="#111" stroke-width="0.15">Сопротивление, Ω</text>
<text x="0" y="0" transform="translate(979.00,189.10) scale(0.88,1)" text-anchor="middle" font-family='"Liberation Sans", sans-serif' font-weight="bold" font-size="11" fill="#000">0.5</text>
<text x="0" y="0" transform="translate(1054.80,189.10) scale(0.88,1)" text-anchor="middle" font-family='"Liberation Sans", sans-serif' font-weight="bold" font-size="11" fill="#000">0.0</text>
<text x="0" y="0" transform="translate(1130.50,189.10) scale(0.88,1)" text-anchor="middle" font-family='"Liberation Sans", sans-serif' font-weight="bold" font-size="11" fill="#000">0.4</text>
<rect x="941" y="195.52" width="228" height="1" fill="#d0d0d0"/>
<text x="0" y="0" transform="translate(1054.80,211.90) scale(0.88,1)" text-anchor="middle" font-family='"Liberation Sans", sans-serif' font-weight="bold" font-size="11" fill="#000">Фаза B</text>
<rect x="941" y="218.35" width="228" height="1" fill="#d0d0d0"/>
<text x="850.00" y="234.70" text-anchor="start" font-family='"Liberation Sans", sans-serif' font-weight="normal" font-size="10.2" fill="#111" textLength="77.90" lengthAdjust="spacingAndGlyphs" stroke="#111" stroke-width="0.15">Сопротивление, Ω</text>
<text x="0" y="0" transform="translate(979.00,234.70) scale(0.88,1)" text-anchor="middle" font-family='"Liberation Sans", sans-serif' font-weight="bold" font-size="11" fill="#000">0.5</text>
<text x="0" y="0" transform="translate(1054.80,234.70) scale(0.88,1)" text-anchor="middle" font-family='"Liberation Sans", sans-serif' font-weight="bold" font-size="11" fill="#000">1.0</text>
<text x="0" y="0" transform="translate(1130.50,234.70) scale(0.88,1)" text-anchor="middle" font-family='"Liberation Sans", sans-serif' font-weight="bold" font-size="11" fill="#000">0.4</text>
<rect x="941" y="241.18" width="228" height="1" fill="#d0d0d0"/>
<text x="0" y="0" transform="translate(1054.80,257.50) scale(0.88,1)" text-anchor="middle" font-family='"Liberation Sans", sans-serif' font-weight="bold" font-size="11" fill="#000">Фаза C</text>
<rect x="941" y="264.01" width="228" height="1" fill="#d0d0d0"/>
<text x="850.00" y="280.30" text-anchor="start" font-family='"Liberation Sans", sans-serif' font-weight="normal" font-size="10.2" fill="#111" textLength="77.90" lengthAdjust="spacingAndGlyphs" stroke="#111" stroke-width="0.15">Сопротивление, Ω</text>
<text x="0" y="0" transform="translate(979.00,280.30) scale(0.88,1)" text-anchor="middle" font-family='"Liberation Sans", sans-serif' font-weight="bold" font-size="11" fill="#000">0.8</text>
<text x="0" y="0" transform="translate(1054.80,280.30) scale(0.88,1)" text-anchor="middle" font-family='"Liberation Sans", sans-serif' font-weight="bold" font-size="11" fill="#000">0.3</text>
<text x="0" y="0" transform="translate(1130.50,280.30) scale(0.88,1)" text-anchor="middle" font-family='"Liberation Sans", sans-serif' font-weight="bold" font-size="11" fill="#000">0.5</text>
<rect x="941" y="286.84" width="228" height="1" fill="#d0d0d0"/>
<rect x="1016.50" y="105.3" width="1" height="182.24" fill="#d0d0d0"/>
<rect x="1092.10" y="105.3" width="1" height="182.24" fill="#d0d0d0"/>
<rect x="1167.90" y="105.3" width="1" height="182.24" fill="#d0d0d0"/>
</svg>
</body></html>
